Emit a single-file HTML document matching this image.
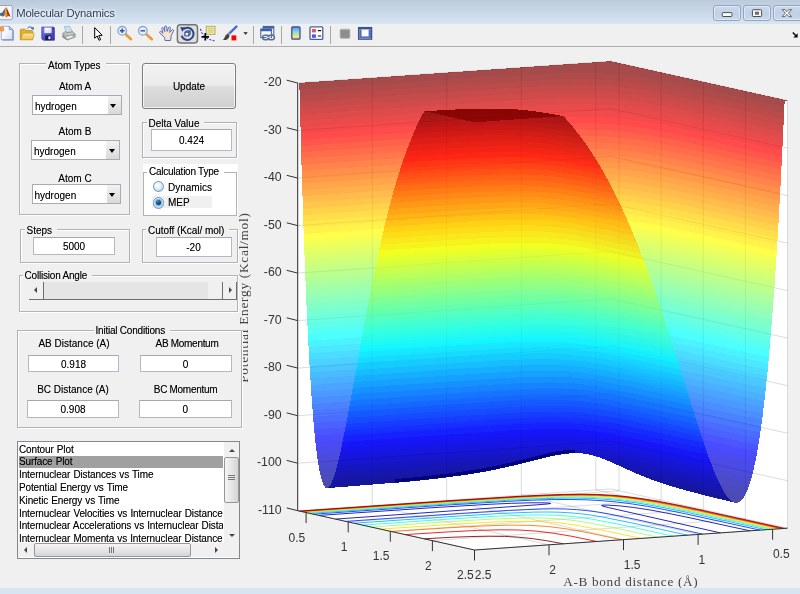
<!DOCTYPE html>
<html lang="en"><head><meta charset="utf-8"><title>Molecular Dynamics</title>
<style>
html,body{margin:0;padding:0}
body{width:800px;height:594px;overflow:hidden;position:relative;background:#f0f0f0;font-family:"Liberation Sans",sans-serif;font-size:10px;color:#000}
.abs,.abs *{position:absolute}
#win{left:0;top:0;width:800px;height:594px;overflow:hidden;will-change:transform}
#title{left:0;top:0;width:800px;height:24px;background:linear-gradient(#bccbdc,#c9d7e7 50%,#d7e4f2)}
#title .t{left:16.2px;top:7px;font-size:11.3px;letter-spacing:-.18px;color:#2f3d58;white-space:nowrap;text-shadow:0 0 3px #fff,0 0 5px #fff}
.cap{top:5px;height:14px;border:1px solid #93a4c2;border-radius:3px;background:linear-gradient(#cbd9ec,#c0d0e6 50%,#c9d7ea);box-shadow:inset 0 0 0 1px rgba(255,255,255,.45)}
#tb{left:0;top:24px;width:800px;height:22px;background:#f0f0f0;border-bottom:1px solid #adadad}
#bot{left:0;top:588.4px;width:800px;height:6px;background:#d7e4f1}
.pn{border:1px solid #b2b2b2;box-shadow:1px 1px 0 #fff,inset 1px 1px 0 #fff;box-sizing:border-box}
.pt{background:#f0f0f0;white-space:nowrap;line-height:12px;height:12px;padding:0 5px 0 2px}
.lb{white-space:nowrap;line-height:12px;height:12px;text-align:center}
.ed{background:#fff;border:1px solid #b3b9c1;border-top-color:#a2a8b0;box-sizing:border-box;text-align:center;white-space:nowrap}
.dd{background:#fff;border:1px solid #a6acb5;box-sizing:border-box;white-space:nowrap}
.dd .a{right:0;top:0;width:13px;height:100%;background:linear-gradient(#f2f2f2,#d9d9d9)}
.dd .a:after{content:"";position:absolute;left:2.5px;top:7.5px;border:3.5px solid transparent;border-top:4px solid #000;border-bottom:0}
.rd{width:11.6px;height:11.6px;border-radius:50%;border:1px solid #7d93ad;box-sizing:border-box;background:radial-gradient(circle at 42% 38%,#ffffff 10%,#d9eefb 45%,#a9d6f3 80%)}
.rd.on:after{content:"";position:absolute;left:2.3px;top:2.3px;width:5px;height:5px;border-radius:50%;background:radial-gradient(circle at 40% 35%,#3f86c8,#0b2a55 70%);box-shadow:0 0 0 1.2px #6fc4ee}
.it{left:1px;height:12.7px;line-height:12.7px;white-space:nowrap;width:204px;overflow:hidden;letter-spacing:-.13px;word-spacing:.5px}
.it.sel{background:#a0a0a0;margin-top:-.5px}
.pt{margin-top:2.5px}.lb{margin-top:1.3px}.ed{padding-top:1.2px}.dd span{margin-top:1px}
.pn{background:#f0f0f0}
#gui{text-shadow:0 0 .6px rgba(0,0,0,.4)}
</style></head><body>
<div id="win" class="abs">
<div id="title"><!--ICON--><div class="t">Molecular Dynamics</div>
<div class="cap" style="left:713px;width:26px"></div>
<div class="cap" style="left:743px;width:26px"></div>
<div class="cap" style="left:773px;width:30px"></div>
<svg style="left:700px;top:0" width="100" height="24" viewBox="700 0 100 24">
<rect x="722.3" y="12.6" width="9.6" height="3.9" rx=".8" fill="#fff" stroke="#4d4d4d" stroke-width="1"/>
<rect x="752.4" y="9.7" width="9.2" height="6.8" rx=".8" fill="#f6f6f6" stroke="#4d4d4d" stroke-width="1"/>
<rect x="755.3" y="12.1" width="3.4" height="2.1" fill="#6d7c9c" stroke="#444" stroke-width=".6"/>
<path d="M782.2 9.6H785L786.9 11.8L788.8 9.6H791.6L788.4 13.1L791.6 16.6H788.8L786.9 14.4L785 16.6H782.2L785.4 13.1Z" fill="#fff" stroke="#5a5a5a" stroke-width=".9" stroke-linejoin="round"/>
</svg>
</div>
<div id="tb"><svg class="abs" style="left:0;top:-24px" width="800" height="48" viewBox="0 0 800 48">
<defs>
<linearGradient id="gcb" x1="0" y1="0" x2="0" y2="1"><stop offset="0" stop-color="#6f7fe0"/><stop offset=".35" stop-color="#7fd0e8"/><stop offset=".6" stop-color="#b8e8a0"/><stop offset=".8" stop-color="#f4e88a"/><stop offset="1" stop-color="#f0b070"/></linearGradient>
<linearGradient id="gfo" x1="0" y1="0" x2="0" y2="1"><stop offset="0" stop-color="#fbe9a0"/><stop offset="1" stop-color="#eec04a"/></linearGradient>
<linearGradient id="gpg" x1="0" y1="0" x2="1" y2="1"><stop offset="0" stop-color="#ffffff"/><stop offset=".5" stop-color="#f2f6fd"/><stop offset="1" stop-color="#c9dbf6"/></linearGradient>
<linearGradient id="gsv" x1="0" y1="0" x2="1" y2="1"><stop offset="0" stop-color="#8484e6"/><stop offset=".5" stop-color="#5252cc"/><stop offset="1" stop-color="#3434a4"/></linearGradient><linearGradient id="gsl" x1="0" y1="0" x2="1" y2="1"><stop offset="0" stop-color="#ffffff"/><stop offset="1" stop-color="#d4d8ee"/></linearGradient></defs>
<!-- matlab logo in title -->
<g transform="translate(-4,5)"><rect x="0" y="0.5" width="16.3" height="14.2" rx="1.5" fill="#f4f6fa" stroke="#8a96ac" stroke-width=".8"/>
<path d="M2 9.5L6.5 7.5L9 3.5L10.2 2.2L12 6L14.5 12L12.5 10.5L10.5 12.5L8.5 10.2L7 11.5Z" fill="#d9541e"/><path d="M2 9.5L6.5 7.5L9 3.5L8.8 8L7 11.5Z" fill="#3a6ea5"/><path d="M10.2 2.2L12 6L14.5 12L12.5 10.5L11 8Z" fill="#a02a18"/><path d="M9 3.5L10.2 2.2L11 8L10.5 12.5L8.5 10.2L8.8 8Z" fill="#f0a030"/></g>
<!-- new -->
<path d="M2.2 27.2H10.2L13.6 30.6V40.4H2.2Z" fill="#5f72ac"/>
<path d="M1.3 26.3H9.2L12.7 29.8V39.5H1.3Z" fill="url(#gpg)" stroke="#8496c6" stroke-width=".7"/><path d="M9.2 26.3V29.8H12.7Z" fill="#b9c8ea" stroke="#7083b8" stroke-width=".6"/>
<circle cx="1.6" cy="28.9" r="2.5" fill="#f08a3c"/><circle cx="1.8" cy="28.9" r="1.1" fill="#ffd860"/><path d="M-.5 26.3L3.8 31.5M3.6 26.5L-.4 31.4" stroke="#f0944a" stroke-width=".9"/>
<!-- open -->
<path d="M20.3 30.2Q20.3 29.2 21.3 29.2H24.8L26.2 30.6H31.8Q32.6 30.6 32.6 31.4V39.6H20.3Z" fill="#e3b02e" stroke="#b58716" stroke-width=".8"/>
<path d="M20.6 39.7L22.9 33.6Q23.2 33 23.9 33H33.6Q34.3 33 34.1 33.7L32.6 39.7Z" fill="url(#gfo)" stroke="#c49a2c" stroke-width=".8"/>
<path d="M27.2 28.6C28.4 26.6 31 26.2 32.6 28.2" fill="none" stroke="#3a5a9c" stroke-width="1"/><path d="M33.9 26.7L33.5 30L30.8 28.6Z" fill="#3a5a9c"/>
<!-- save -->
<path d="M41.8 27.1H53.6L54.4 27.9V40.2H43.2L41.8 38.8Z" fill="url(#gsv)" stroke="#34349c" stroke-width=".7"/>
<rect x="44.4" y="27.5" width="7.2" height="5.6" fill="url(#gsl)"/><rect x="45.3" y="35.4" width="5.9" height="4.8" fill="#1a1a48"/><rect x="48.4" y="36.4" width="2" height="2.8" fill="#f0f0fa"/><rect x="52.6" y="28" width="1" height="1.2" fill="#23236a"/>
<!-- print -->
<path d="M64.2 26.6L69.4 26.2L72.6 31.6L66.4 32.6Z" fill="#c4e2f8" stroke="#8aa4c4" stroke-width=".6"/>
<path d="M62.8 33.4L65.6 31.4L66.6 32.8L72.6 31.8L75.2 34V37.2L67.4 40L62.8 37.4Z" fill="#c9c9c9" stroke="#7c7c7c" stroke-width=".7" stroke-linejoin="round"/>
<path d="M62.8 33.4L67.4 35.8L75.2 34M67.4 35.8V40" fill="none" stroke="#8a8a8a" stroke-width=".6"/>
<path d="M62.9 35L67.3 37.4V39.9L62.9 37.3Z" fill="#8e8e8e"/>
<path d="M65.2 37.2L71.6 35.4L73.8 36.8L67.6 38.9Z" fill="#f6f6f6" stroke="#9a9a9a" stroke-width=".4"/>
<rect x="72.6" y="35.2" width="1.6" height="1" fill="#3fbf4f"/>
<!-- sep -->
<path d="M82.5 26V44M110.5 26V44M253.5 26V44M281.5 26V44M330.5 26V44" stroke="#a8a8a8" stroke-width="1"/>
<!-- arrow cursor -->
<path d="M94.7 27.6V38.2L97.2 36L99 40.3L100.6 39.6L98.8 35.5L102.2 35.3Z" fill="#fff" stroke="#000" stroke-width="1" stroke-linejoin="miter"/>
<!-- zoom in -->
<path d="M125.2 33.8L131 39.2" stroke="#e59a3c" stroke-width="2.6" stroke-linecap="round"/><circle cx="122.2" cy="30.8" r="4.3" fill="#e6f0fb" stroke="#8ea6cc" stroke-width="1.3"/><path d="M119.9 30.8H124.5M122.2 28.5V33.1" stroke="#2c4fa3" stroke-width="1.4"/>
<!-- zoom out -->
<path d="M145.8 33.8L151.8 39.2" stroke="#e59a3c" stroke-width="2.6" stroke-linecap="round"/><circle cx="142.8" cy="30.8" r="4.3" fill="#e6f0fb" stroke="#8ea6cc" stroke-width="1.3"/><path d="M140.5 30.8H145.1" stroke="#2c4fa3" stroke-width="1.4"/>
<!-- hand -->
<path d="M165 40.5L164.6 37.5L160 33.2C159 32.2 160 30.8 161.2 31.6L163 33.2L161.8 28.6C161.6 27.2 163.2 27 163.6 28.2L164.8 31.6L164.6 27C164.7 25.6 166.6 25.6 166.7 27L167.2 31.4L168.6 27.6C169.1 26.4 170.7 26.9 170.4 28.2L169.6 32.4L171.8 30C172.8 29 174.2 30 173.4 31.2L171.2 35.4L170.6 40.5Z" fill="#fbe2cc" stroke="#4a68be" stroke-width=".95" stroke-linejoin="round"/>
<!-- rotate (pressed) -->
<rect x="177.4" y="24.7" width="20.1" height="18.2" rx="2.8" fill="#dedede" stroke="#747474" stroke-width="1.5"/>
<path d="M183.4 29.2A6.1 6.1 0 1 1 181.6 35.6" fill="none" stroke="#2d4486" stroke-width="2"/><path d="M180.2 27L185.6 27.6L182.2 31.8Z" fill="#2d4486"/>
<path d="M184.8 32.2L186.2 30.8H190.2V34.6L188.8 36H184.8Z" fill="#7d90c4" stroke="#2d4486" stroke-width=".8"/><rect x="185.8" y="33" width="2.2" height="2.2" fill="#f4f6fb"/><path d="M184.8 32.2H188.8V36M188.8 32.2L190.2 30.8" fill="none" stroke="#2d4486" stroke-width=".7"/>
<!-- data cursor -->
<path d="M200.5 28.8C201.5 35 206.5 39.5 214.5 40.8" fill="none" stroke="#2222ee" stroke-width="1" stroke-dasharray="2.2 1.4"/>
<rect x="206.2" y="26.3" width="8.8" height="8" fill="#f4eea0" stroke="#a09a50" stroke-width=".8"/><path d="M207.8 28.4H213.4M207.8 30.2H213.4M207.8 32H213.4" stroke="#b8b070" stroke-width=".7"/>
<path d="M201.5 36.8H209M205.3 33V40.6" stroke="#000" stroke-width="1.7"/>
<!-- brush -->
<path d="M236.4 26.6L228.6 34.2" stroke="#4a6ed0" stroke-width="2.4" stroke-linecap="round"/><path d="M229.6 33.2L227.2 35" stroke="#aaa" stroke-width="2.6"/>
<path d="M228.6 34.2C227.8 33.6 225.6 34.6 225 36.4C224.6 37.8 224 38.8 222.8 39.8C225.2 40.4 228 39.4 229 37.4C229.6 36.2 229.4 34.8 228.6 34.2Z" fill="#444"/>
<rect x="231.5" y="35.4" width="4.8" height="5" fill="#f00"/>
<path d="M243.4 32.2H247.8L245.6 34.8Z" fill="#222"/>
<!-- link -->
<rect x="263.2" y="26.4" width="10.6" height="8.6" fill="#f0f4fb" stroke="#3f5fa8" stroke-width="1"/><rect x="263.2" y="26.4" width="10.6" height="2.2" fill="#3f5fa8"/>
<rect x="260.8" y="29" width="10.6" height="8.6" fill="#f4f7fc" stroke="#3f5fa8" stroke-width="1"/><rect x="260.8" y="29" width="10.6" height="2.2" fill="#3f5fa8"/>
<rect x="262.6" y="35.2" width="6.4" height="4.6" rx="2.2" fill="none" stroke="#5a6e96" stroke-width="1.5"/><rect x="268" y="35.2" width="6.4" height="4.6" rx="2.2" fill="none" stroke="#5a6e96" stroke-width="1.5"/><path d="M266.4 37.5H270.8" stroke="#c8d2e4" stroke-width="1"/>
<!-- colorbar -->
<rect x="291.8" y="26.8" width="8.2" height="12.4" rx="1" fill="url(#gcb)" stroke="#3c4f96" stroke-width="1.3"/>
<!-- legend -->
<rect x="310" y="26.8" width="12.8" height="12.6" rx="1" fill="#fff" stroke="#48609e" stroke-width="1.3"/><rect x="311.9" y="29" width="4" height="3.4" fill="#f05050"/><rect x="311.9" y="34.4" width="4" height="3.4" fill="#5050f0"/><path d="M317.8 30.6H321.2M317.8 36H321.2" stroke="#111" stroke-width="1.2"/>
<!-- gray square -->
<rect x="340.2" y="29.2" width="9.6" height="9" rx="1" fill="#8e8e8e" stroke="#a6a6a6" stroke-width=".8"/><path d="M340.6 29.6H349.4" stroke="#b4b4b4" stroke-width="1"/>
<!-- plot tools -->
<rect x="358.6" y="27.6" width="13" height="11.6" fill="#fff" stroke="#3a5296" stroke-width="1.3"/><rect x="358.6" y="27.6" width="13" height="1.8" fill="#3a5296"/><rect x="359.2" y="29.4" width="2.4" height="7.6" fill="#5a70b0"/><rect x="368.6" y="29.4" width="2.4" height="7.6" fill="#5a70b0"/><rect x="359.2" y="36.4" width="11.8" height="2.2" fill="#5a70b0"/>
<!-- dock arrow -->
<path d="M792.8 32.6L796.4 36.2" fill="none" stroke="#000" stroke-width="1.4"/><path d="M797.6 33.2V37.4H793.4Z" fill="#000"/>
</svg>
</div>
<svg class="abs" id="plot" style="left:0;top:0" width="800" height="594" viewBox="0 0 800 594">
<g fill="#fff" shape-rendering="crispEdges"><polygon points="297.7,510.7 474.5,550 787.5,528.2 787.5,100.5 610.7,61.2 297.7,83"/></g>
<path d="M772.6 529.2L595.8 489.9L595.8 62.3M306.1 512.6L619.1 490.8L619.1 63.1M698.1 534.4L521.3 495.1L521.3 67.4M348.2 521.9L661.2 500.1L661.2 72.4M623.5 539.6L446.7 500.3L446.7 72.6M390.3 531.3L703.3 509.5L703.3 81.8M549 544.8L372.2 505.5L372.2 77.8M432.4 540.6L745.4 518.8L745.4 91.2M474.5 550L297.7 510.7L297.7 83M474.5 550L787.5 528.2L787.5 100.5M297.7 510.7L610.7 488.9L787.5 528.2M297.7 463.2L610.7 441.4L787.5 480.7M297.7 415.7L610.7 393.9L787.5 433.2M297.7 368.1L610.7 346.3L787.5 385.6M297.7 320.6L610.7 298.8L787.5 338.1M297.7 273.1L610.7 251.3L787.5 290.6M297.7 225.6L610.7 203.8L787.5 243.1M297.7 178.1L610.7 156.3L787.5 195.6M297.7 130.5L610.7 108.7L787.5 148M297.7 83L610.7 61.2L787.5 100.5" fill="none" stroke="#000" stroke-opacity=".125" stroke-width="1"/>
<g fill="none" stroke-width="1" stroke-opacity=".85"><path stroke="#0000af" d="M749.9 530.8L685.2 516.8L665.4 512.8L649.6 509.9L633.7 507.5L620.2 505.9L607.1 505.1L602.6 505.2L601.5 505.5L603 506.2L608.6 507.6L720.4 532.9M335.6 519.1L537.2 504.8L547.5 504L550.7 503.4L549.1 503.1L544.1 502.8L529.9 502.8L511.4 503.3L489.1 504.3L430.6 507.8L319 515.4"/><path stroke="#0030ff" d="M759.9 530.1L685.9 513.9L664.7 509.6L647.7 506.4L631.2 503.8L616.5 502L601.8 500.7L586.2 499.8L569.7 499.5L551.9 499.6L531.7 500.2L506.5 501.4L442.7 505.3L313.3 514.2M345.7 521.4L459.6 513.5L508.6 510.4L541.6 509L554.4 508.8L566 509L576.4 509.6L586.8 510.6L597.6 512L609.4 514L638 519.9L702.5 534.1"/><path stroke="#00afff" d="M765.9 529.7L688.5 512.7L667.1 508.3L649.9 505.1L634 502.5L619 500.5L604.1 499.2L589.4 498.4L573.3 498.1L555.6 498.3L534.7 498.9L510.5 500.1L445.9 504.1L309.9 513.4M354.1 523.2L453.8 516.4L501.6 513.4L534.4 512.1L547.4 512L559 512.2L569.9 512.8L580.4 513.7L591.1 515.1L602.8 517.1L631.3 522.8L687.6 535.2"/><path stroke="#20ffdf" d="M770.4 529.4L691 512L669.4 507.5L652.1 504.2L635.7 501.5L621.1 499.6L606.8 498.3L591.9 497.4L576 497.1L558 497.3L537.9 498L512.8 499.2L447.5 503.2L307.3 512.8M362.3 525.1L450.4 519L496.2 516.2L528.2 515L540.7 514.9L552.2 515.1L563 515.7L573.3 516.6L583.8 517.9L595.1 519.7L622.6 525.1L673.1 536.2"/><path stroke="#9fff60" d="M774.1 529.1L693.2 511.4L671.1 506.8L653.9 503.5L637.7 500.8L622.9 498.8L608.5 497.5L593.6 496.7L577.8 496.4L559.8 496.5L538.8 497.2L514.2 498.4L448.1 502.6L305.3 512.4M370.9 527L448.9 521.7L491.6 519.1L521.8 518L534.2 517.9L545.3 518.2L555.9 518.7L565.8 519.6L576.2 520.8L587 522.5L613.3 527.6L657.9 537.2"/><path stroke="#ffdf00" d="M777.2 528.9L694.6 510.7L672.3 506.1L655 502.8L638.7 500.1L624.1 498.2L609.9 496.8L595.1 496L579 495.7L561.1 495.9L540.7 496.6L515.7 497.8L449 502L303.5 512M380.4 529.1L447.7 524.6L487.5 522.3L516 521.3L538.3 521.5L548.5 522L558 522.8L567.8 524L578.2 525.6L602.6 530.2L641 538.4"/><path stroke="#ff7000" d="M780 528.7L696.1 510.3L673.8 505.6L656.3 502.3L639.7 499.5L625.1 497.6L610.8 496.2L596.2 495.4L580.3 495.1L562.8 495.3L542.2 496L517.1 497.2L450.1 501.4L302 511.6M391.5 531.5L446.8 527.9L482.2 526L508.2 525.1L529.2 525.3L547.8 526.5L566.9 528.9L589 532.9L621.4 539.8"/><path stroke="#ef0000" d="M782.4 528.6L697.3 509.8L675.3 505.2L657.5 501.8L641.2 499.1L626.4 497.1L612 495.7L597.1 494.9L581.1 494.7L563.3 494.9L542.5 495.6L517 496.8L450.1 501L300.6 511.3M405.2 534.6L448.3 531.9L477.5 530.4L500.5 529.8L519.4 530L536 531.1L553.2 533.2L571.9 536.3L597.1 541.5"/><path stroke="#800000" d="M784.6 528.4L698.7 509.5L676.5 504.8L658.8 501.4L642.1 498.6L627.4 496.7L613.1 495.3L598.2 494.5L582.2 494.2L564.4 494.4L543.8 495.1L518 496.4L450.6 500.6L299.3 511.1M424.3 538.8L451.1 537.3L471.9 536.5L489.3 536.2L504.5 536.4L518.5 537.2L532.2 538.6L546.5 540.7L563.4 543.8"/></g>
<g shape-rendering="crispEdges"><g id="sb" opacity=".7"><path fill="#00008f" d="M646.7 477.8L645.7 477.3L645.6 477L647.5 476.9L652.9 477.5L670 480.3L697.3 485.8L744.6 496L742.3 499.3L740 501.4L737.8 502.6L736.5 502.8L735.1 502.7L704.1 495.2L680.3 488.9L662.9 483.6ZM322 480.9L400.8 475.5L446.6 472.7L474.4 471.2L481.5 471L484.7 471.2L484.2 471.4L472.4 473.4L457.9 475.6L440.6 477.8L422.9 479.8L381.7 483.8L326.8 488.2L325.5 487.7L324.3 486.2L323 483.8Z"/><path fill="#00009f" d="M744.6 496L697.3 485.8L670 480.3L652.9 477.5L647.5 476.9L645.6 477L645.7 477.3L646.7 477.8L635.7 473.3L622.2 467.1L621.7 466.8L621.9 466.6L623.3 466.4L631.1 466.8L643.1 468.3L657.3 470.6L671.6 473.3L690.5 477.1L747.6 489.6L746.3 492.6ZM484.2 471.4L484.7 471.2L481.5 471L474.4 471.2L446.6 472.7L400.8 475.5L322 480.9L320.2 474.3L417 467.7L472.4 464.3L493.3 463.2L509.3 462.7L519 462.6L522.5 462.9L522.1 463.1L503 467.6Z"/><path fill="#0000af" d="M747.6 489.6L690.5 477.1L671.6 473.3L657.3 470.6L643.1 468.3L631.1 466.8L623.3 466.4L621.9 466.6L621.7 466.8L622.2 467.1L610.4 461.8L601.5 458.1L600.9 457.7L601.9 457.5L603.8 457.4L609.7 457.5L617.1 458L631.7 459.5L647.9 461.9L663.6 464.8L684 468.9L749.9 483.2ZM522.1 463.1L522.5 462.9L519 462.6L509.3 462.7L493.3 463.2L472.4 464.3L417 467.7L320.2 474.3L318.9 467.8L431.5 460.1L490.3 456.6L513.2 455.6L532.7 455.1L547.3 455.3L551.3 455.7L550.9 456L541.7 458.1Z"/><path fill="#0000bf" d="M749.9 483.2L684 468.9L663.6 464.8L647.9 461.9L631.7 459.5L617.1 458L609.7 457.5L603.8 457.4L601.9 457.5L600.9 457.7L601.5 458.1L594.9 456L589.2 454.5L584 453.6L577.9 453.1L572.3 453L566.2 453.4L559.5 454.3L550.9 456L551.3 455.7L547.3 455.3L532.7 455.1L513.2 455.6L490.3 456.6L431.5 460.1L318.9 467.8L317.9 461.3L440.8 452.9L474.8 450.8L502.7 449.3L525.2 448.4L544.5 448L561.2 448.1L580.6 448.7L599.5 449.5L614.3 450.6L628.2 452.1L643.7 454.4L661.2 457.5L681.5 461.5L751.8 476.8Z"/><path fill="#0000cf" d="M751.8 476.8L681.5 461.5L661.2 457.5L643.7 454.4L628.2 452.1L614.3 450.6L599.5 449.5L580.6 448.7L561.2 448.1L544.5 448L525.2 448.4L502.7 449.3L474.8 450.8L440.8 452.9L317.9 461.3L317 454.9L440.8 446.4L502.5 442.8L526.2 441.8L545.8 441.3L564.1 441.3L582.2 441.7L599.7 442.6L614.4 443.7L629.2 445.4L645.5 447.9L662.2 451L682.9 455.1L753.4 470.5Z"/><path fill="#0000df" d="M753.4 470.5L682.9 455.1L662.2 451L645.5 447.9L629.2 445.4L614.4 443.7L599.7 442.6L582.2 441.7L564.1 441.3L545.8 441.3L526.2 441.8L502.5 442.8L440.8 446.4L317 454.9L316.2 448.5L441.7 439.9L504.3 436.2L527.3 435.2L547.7 434.6L565.6 434.6L583.2 435L599.6 435.8L614.6 437L629.8 438.8L645.5 441.2L662.5 444.3L683.4 448.6L754.8 464.1Z"/><path fill="#0000ef" d="M754.8 464.1L683.4 448.6L662.5 444.3L645.5 441.2L629.8 438.8L614.6 437L599.6 435.8L583.2 435L565.6 434.6L547.7 434.6L527.3 435.2L504.3 436.2L441.7 439.9L316.2 448.5L315.4 442.1L441.4 433.5L504.3 429.7L528.3 428.6L548.4 428L566.8 427.9L583.9 428.3L600.1 429.1L615.4 430.4L630.2 432.2L645.9 434.7L662.8 437.8L684 442.1L756.1 457.8Z"/><path fill="#0000ff" d="M756.1 457.8L684 442.1L662.8 437.8L645.9 434.7L630.2 432.2L615.4 430.4L600.1 429.1L583.9 428.3L566.8 427.9L548.4 428L528.3 428.6L504.3 429.7L441.4 433.5L315.4 442.1L314.8 435.7L442.5 427L505.4 423.2L529.4 422.1L549.7 421.5L568 421.4L584.5 421.7L600.2 422.5L615.6 423.9L630.2 425.6L646.2 428.2L662.8 431.2L684.2 435.5L757.3 451.5Z"/><path fill="#0010ff" d="M757.3 451.5L684.2 435.5L662.8 431.2L646.2 428.2L630.2 425.6L615.6 423.9L600.2 422.5L584.5 421.7L568 421.4L549.7 421.5L529.4 422.1L505.4 423.2L442.5 427L314.8 435.7L314.2 429.3L442.3 420.6L506.1 416.7L530.5 415.6L550.5 415L569.1 414.9L585.5 415.2L601.2 416L616.1 417.3L630.7 419.2L646.9 421.7L664.3 424.9L685.3 429.2L758.3 445.2Z"/><path fill="#0020ff" d="M758.3 445.2L685.3 429.2L664.3 424.9L646.9 421.7L630.7 419.2L616.1 417.3L601.2 416L585.5 415.2L569.1 414.9L550.5 415L530.5 415.6L506.1 416.7L442.3 420.6L314.2 429.3L313.6 423L443.5 414.1L506.8 410.2L530.2 409.1L550.9 408.5L569.1 408.4L585.9 408.7L601.2 409.5L616.3 410.8L631.4 412.7L647.3 415.2L664 418.4L685.3 422.7L759.4 438.9Z"/><path fill="#0030ff" d="M759.4 438.9L685.3 422.7L664 418.4L647.3 415.2L631.4 412.7L616.3 410.8L601.2 409.5L585.9 408.7L569.1 408.4L550.9 408.5L530.2 409.1L506.8 410.2L443.5 414.1L313.6 423L313.1 416.6L443.4 407.7L507.1 403.8L531.7 402.7L552.1 402.1L569.9 401.9L586.6 402.3L602 403.1L616.7 404.4L631.5 406.2L647.8 408.8L664.8 412L686 416.4L760.3 432.6Z"/><path fill="#0040ff" d="M760.3 432.6L686 416.4L664.8 412L647.8 408.8L631.5 406.2L616.7 404.4L602 403.1L586.6 402.3L569.9 401.9L552.1 402.1L531.7 402.7L507.1 403.8L443.4 407.7L313.1 416.6L312.6 410.3L443.8 401.3L507.5 397.4L532.7 396.2L553 395.6L570.9 395.5L587.3 395.8L602.9 396.6L617.6 398L632.6 399.9L648.4 402.4L665.5 405.7L686.4 410L761.2 426.3Z"/><path fill="#0050ff" d="M761.2 426.3L686.4 410L665.5 405.7L648.4 402.4L632.6 399.9L617.6 398L602.9 396.6L587.3 395.8L570.9 395.5L553 395.6L532.7 396.2L507.5 397.4L443.8 401.3L312.6 410.3L312.1 403.9L444.2 394.9L507.9 391L532.6 389.8L553.3 389.2L571.5 389L587.6 389.4L603 390.2L617.7 391.5L632.7 393.4L648.7 396L665.6 399.2L686.8 403.6L762.1 420Z"/><path fill="#0060ff" d="M762.1 420L686.8 403.6L665.6 399.2L648.7 396L632.7 393.4L617.7 391.5L603 390.2L587.6 389.4L571.5 389L553.3 389.2L532.6 389.8L507.9 391L444.2 394.9L312.1 403.9L311.6 397.6L444.6 388.5L508.2 384.6L532.5 383.4L553.1 382.8L571.3 382.6L587.9 382.9L603.4 383.8L618.2 385.1L633.1 387L649 389.6L665.9 392.8L687.1 397.2L762.9 413.7Z"/><path fill="#0070ff" d="M762.9 413.7L687.1 397.2L665.9 392.8L649 389.6L633.1 387L618.2 385.1L603.4 383.8L587.9 382.9L571.3 382.6L553.1 382.8L532.5 383.4L508.2 384.6L444.6 388.5L311.6 397.6L311.2 391.3L444.2 382.2L509.2 378.2L534.1 377L554.6 376.4L572.7 376.2L588.3 376.5L603.7 377.4L618.2 378.7L632.8 380.5L649 383.2L666 386.3L687.9 390.9L763.6 407.4Z"/><path fill="#0080ff" d="M763.6 407.4L687.9 390.9L666 386.3L649 383.2L632.8 380.5L618.2 378.7L603.7 377.4L588.3 376.5L572.7 376.2L554.6 376.4L534.1 377L509.2 378.2L444.2 382.2L311.2 391.3L310.8 385L445.1 375.7L509.6 371.8L534 370.6L555 370L573 369.8L588.7 370.1L603.3 370.9L618.1 372.2L633.3 374.2L649 376.7L666.5 380L687.6 384.4L764.4 401.2Z"/><path fill="#008fff" d="M764.4 401.2L687.6 384.4L666.5 380L649 376.7L633.3 374.2L618.1 372.2L603.3 370.9L588.7 370.1L573 369.8L555 370L534 370.6L509.6 371.8L445.1 375.7L310.8 385L310.4 378.6L446.1 369.3L510.2 365.4L534.3 364.2L555 363.6L573 363.4L589 363.7L604 364.5L618.7 365.9L633.6 367.8L649.5 370.4L666.4 373.6L687.9 378L765.1 394.9Z"/><path fill="#009fff" d="M765.1 394.9L687.9 378L666.4 373.6L649.5 370.4L633.6 367.8L618.7 365.9L604 364.5L589 363.7L573 363.4L555 363.6L534.3 364.2L510.2 365.4L446.1 369.3L310.4 378.6L310 372.3L445.7 363L510.6 359L535.6 357.8L556 357.2L573.5 357L589.6 357.4L604.7 358.2L619.3 359.5L634.2 361.4L650 364L666.9 367.2L688.8 371.7L765.8 388.6Z"/><path fill="#00afff" d="M765.8 388.6L688.8 371.7L666.9 367.2L650 364L634.2 361.4L619.3 359.5L604.7 358.2L589.6 357.4L573.5 357L556 357.2L535.6 357.8L510.6 359L445.7 363L310 372.3L309.6 366L446.6 356.6L511.1 352.6L535.3 351.5L555.9 350.8L573.4 350.7L589.5 351L604.4 351.8L618.9 353.1L633.7 355L649.7 357.5L666.8 360.8L688.5 365.2L766.4 382.3Z"/><path fill="#00bfff" d="M766.4 382.3L688.5 365.2L666.8 360.8L649.7 357.5L633.7 355L618.9 353.1L604.4 351.8L589.5 351L573.4 350.7L555.9 350.8L535.3 351.5L511.1 352.6L446.6 356.6L309.6 366L309.2 359.7L445.4 350.4L510.7 346.3L535.4 345.1L555.9 344.5L574 344.3L590.1 344.6L605 345.4L619.7 346.8L634.5 348.7L650.6 351.3L667.7 354.5L689.6 359.1L767.1 376.1Z"/><path fill="#00cfff" d="M767.1 376.1L689.6 359.1L667.7 354.5L650.6 351.3L634.5 348.7L619.7 346.8L605 345.4L590.1 344.6L574 344.3L555.9 344.5L535.4 345.1L510.7 346.3L445.4 350.4L309.2 359.7L308.9 353.4L446 344L511.7 339.9L536.4 338.7L556.9 338.1L575.1 337.9L590.7 338.3L605.4 339.1L619.8 340.4L634.6 342.3L650.5 344.9L667.9 348.2L689.7 352.7L767.7 369.8Z"/><path fill="#00dfff" d="M767.7 369.8L689.7 352.7L667.9 348.2L650.5 344.9L634.6 342.3L619.8 340.4L605.4 339.1L590.7 338.3L575.1 337.9L556.9 338.1L536.4 338.7L511.7 339.9L446 344L308.9 353.4L308.6 347.1L446.5 337.6L511.8 333.6L536.5 332.4L556.5 331.8L574.5 331.6L590.6 331.9L605.6 332.7L620.2 334L634.7 335.9L650.8 338.5L668.2 341.8L689.8 346.3L768.3 363.5Z"/><path fill="#00efff" d="M768.3 363.5L689.8 346.3L668.2 341.8L650.8 338.5L634.7 335.9L620.2 334L605.6 332.7L590.6 331.9L574.5 331.6L556.5 331.8L536.5 332.4L511.8 333.6L446.5 337.6L308.6 347.1L308.2 340.8L446.6 331.3L511.9 327.2L536.6 326L557.3 325.4L575.2 325.2L591.3 325.5L606.1 326.3L620.3 327.6L635.4 329.6L651.5 332.3L668.6 335.5L690.4 340L768.9 357.2Z"/><path fill="#00ffff" d="M768.9 357.2L690.4 340L668.6 335.5L651.5 332.3L635.4 329.6L620.3 327.6L606.1 326.3L591.3 325.5L575.2 325.2L557.3 325.4L536.6 326L511.9 327.2L446.6 331.3L308.2 340.8L307.9 334.5L446.7 324.9L512.5 320.9L536.7 319.7L557.7 319L575.3 318.9L591.1 319.2L606 320L620.3 321.3L635.5 323.2L651.3 325.8L668.6 329.1L690.5 333.7L769.4 351Z"/><path fill="#10ffef" d="M769.4 351L690.5 333.7L668.6 329.1L651.3 325.8L635.5 323.2L620.3 321.3L606 320L591.1 319.2L575.3 318.9L557.7 319L536.7 319.7L512.5 320.9L446.7 324.9L307.9 334.5L307.6 328.2L447.3 318.6L512.6 314.5L537.3 313.4L557.3 312.7L575.3 312.5L591.3 312.8L606 313.6L620.7 314.9L635.2 316.8L651.6 319.5L668.9 322.8L690.5 327.3L770 344.7Z"/><path fill="#20ffdf" d="M770 344.7L690.5 327.3L668.9 322.8L651.6 319.5L635.2 316.8L620.7 314.9L606 313.6L591.3 312.8L575.3 312.5L557.3 312.7L537.3 313.4L512.6 314.5L447.3 318.6L307.6 328.2L307.3 321.9L447 312.3L512.3 308.2L537.4 307L557.9 306.4L575.4 306.2L591.4 306.5L606.4 307.3L620.9 308.6L635.8 310.5L651.9 313.2L669.2 316.5L690.8 321L770.5 338.4Z"/><path fill="#30ffcf" d="M770.5 338.4L690.8 321L669.2 316.5L651.9 313.2L635.8 310.5L620.9 308.6L606.4 307.3L591.4 306.5L575.4 306.2L557.9 306.4L537.4 307L512.3 308.2L447 312.3L307.3 321.9L307 315.6L446.7 306L512.4 301.9L537 300.7L558 300L575.9 299.8L591.8 300.1L606.8 300.9L621 302.2L636.1 304.2L652.2 306.9L669.3 310.1L691.4 314.7L771 332.2Z"/><path fill="#40ffbf" d="M771 332.2L691.4 314.7L669.3 310.1L652.2 306.9L636.1 304.2L621 302.2L606.8 300.9L591.8 300.1L575.9 299.8L558 300L537 300.7L512.4 301.9L446.7 306L307 315.6L306.7 309.3L447.3 299.6L513 295.6L537.6 294.4L558.7 293.7L576.4 293.5L592.2 293.8L606.9 294.6L621.3 295.9L636.4 297.9L652.5 300.5L669.8 303.8L691.6 308.4L771.5 325.9Z"/><path fill="#50ffaf" d="M771.5 325.9L691.6 308.4L669.8 303.8L652.5 300.5L636.4 297.9L621.3 295.9L606.9 294.6L592.2 293.8L576.4 293.5L558.7 293.7L537.6 294.4L513 295.6L447.3 299.6L306.7 309.3L306.4 303L447.5 293.3L513.7 289.2L538.1 288L558.8 287.3L576.8 287.2L592.3 287.5L607 288.2L621.2 289.5L636.3 291.5L652.3 294.1L669.7 297.5L691.9 302L772 319.6Z"/><path fill="#60ff9f" d="M772 319.6L691.9 302L669.7 297.5L652.3 294.1L636.3 291.5L621.2 289.5L607 288.2L592.3 287.5L576.8 287.2L558.8 287.3L538.1 288L513.7 289.2L447.5 293.3L306.4 303L306.2 296.7L448.1 287L514.3 282.8L538.7 281.7L559.5 281L577.2 280.8L593 281.1L607.8 282L622.1 283.3L636.6 285.2L653 287.9L670.3 291.2L692.4 295.8L772.5 313.4Z"/><path fill="#70ff8f" d="M772.5 313.4L692.4 295.8L670.3 291.2L653 287.9L636.6 285.2L622.1 283.3L607.8 282L593 281.1L577.2 280.8L559.5 281L538.7 281.7L514.3 282.8L448.1 287L306.2 296.7L305.9 290.4L447.4 280.7L513.5 276.6L538.6 275.4L559 274.7L576.6 274.5L592.6 274.8L607.1 275.6L621.7 276.9L636.5 278.8L652.6 281.5L670.2 284.8L692.3 289.4L773 307.1Z"/><path fill="#80ff80" d="M773 307.1L692.3 289.4L670.2 284.8L652.6 281.5L636.5 278.8L621.7 276.9L607.1 275.6L592.6 274.8L576.6 274.5L559 274.7L538.6 275.4L513.5 276.6L447.4 280.7L305.9 290.4L305.6 284.1L447.6 274.4L514.2 270.2L539.3 269L559.4 268.4L577.2 268.2L593.3 268.5L608.1 269.3L622.3 270.6L637.1 272.5L653.4 275.2L671 278.6L693 283.2L773.4 300.9Z"/><path fill="#8fff70" d="M773.4 300.9L693 283.2L671 278.6L653.4 275.2L637.1 272.5L622.3 270.6L608.1 269.3L593.3 268.5L577.2 268.2L559.4 268.4L539.3 269L514.2 270.2L447.6 274.4L305.6 284.1L305.4 277.9L447.7 268.1L514.4 263.9L539.5 262.7L559.7 262L577.2 261.9L593.1 262.1L608.1 262.9L622.4 264.3L637 266.2L653.3 268.9L670.9 272.2L693 276.8L773.9 294.6Z"/><path fill="#9fff60" d="M773.9 294.6L693 276.8L670.9 272.2L653.3 268.9L637 266.2L622.4 264.3L608.1 262.9L593.1 262.1L577.2 261.9L559.7 262L539.5 262.7L514.4 263.9L447.7 268.1L305.4 277.9L305.1 271.6L447.9 261.7L514.5 257.6L539.6 256.4L560 255.7L577.6 255.5L593.6 255.8L608.3 256.6L622.6 258L637.2 259.9L653.5 262.6L671.1 265.9L693.2 270.5L774.3 288.3Z"/><path fill="#afff50" d="M774.3 288.3L693.2 270.5L671.1 265.9L653.5 262.6L637.2 259.9L622.6 258L608.3 256.6L593.6 255.8L577.6 255.5L560 255.7L539.6 256.4L514.5 257.6L447.9 261.7L305.1 271.6L304.9 265.3L448.1 255.4L514.7 251.3L539.8 250.1L560.2 249.4L577.8 249.2L593.8 249.5L608.5 250.3L622.8 251.6L637.4 253.5L653.7 256.2L671.3 259.6L693.4 264.2L774.8 282.1Z"/><path fill="#bfff40" d="M774.8 282.1L693.4 264.2L671.3 259.6L653.7 256.2L637.4 253.5L622.8 251.6L608.5 250.3L593.8 249.5L577.8 249.2L560.2 249.4L539.8 250.1L514.7 251.3L448.1 255.4L304.9 265.3L304.7 259L448.4 249.1L514.9 245L540 243.7L560.4 243.1L578 242.9L593.8 243.2L608.7 244L623 245.3L637.6 247.2L653.9 249.9L671.5 253.3L693.5 257.9L775.2 275.8Z"/><path fill="#cfff30" d="M775.2 275.8L693.5 257.9L671.5 253.3L653.9 249.9L637.6 247.2L623 245.3L608.7 244L593.8 243.2L578 242.9L560.4 243.1L540 243.7L514.9 245L448.4 249.1L304.7 259L304.4 252.7L448.6 242.8L515.2 238.6L540.2 237.4L560.5 236.8L578.2 236.6L594 236.9L608.9 237.7L623.2 239L637.7 240.9L654.1 243.6L671.6 247L693.7 251.6L775.6 269.6Z"/><path fill="#dfff20" d="M775.6 269.6L693.7 251.6L671.6 247L654.1 243.6L637.7 240.9L623.2 239L608.9 237.7L594 236.9L578.2 236.6L560.5 236.8L540.2 237.4L515.2 238.6L448.6 242.8L304.4 252.7L304.2 246.4L448.8 236.5L515.4 232.3L540.5 231.1L560.6 230.5L578.4 230.3L594.2 230.6L609.1 231.4L623.4 232.7L637.9 234.6L654.2 237.3L671.5 240.6L693.9 245.2L776 263.3Z"/><path fill="#efff10" d="M776 263.3L693.9 245.2L671.5 240.6L654.2 237.3L637.9 234.6L623.4 232.7L609.1 231.4L594.2 230.6L578.4 230.3L560.6 230.5L540.5 231.1L515.4 232.3L448.8 236.5L304.2 246.4L304 240.2L449 230.2L515.6 226L540.6 224.8L560.7 224.1L578.4 223.9L594.3 224.2L609.3 225L623.7 226.4L638.1 228.3L654.4 231L671.7 234.3L694 238.9L776.4 257Z"/><path fill="#ffff00" d="M776.4 257L694 238.9L671.7 234.3L654.4 231L638.1 228.3L623.7 226.4L609.3 225L594.3 224.2L578.4 223.9L560.7 224.1L540.6 224.8L515.6 226L449 230.2L304 240.2L303.7 233.9L449.2 223.9L515.6 219.7L540.5 218.5L560.9 217.8L578.8 217.6L594.9 217.9L609.7 218.8L624 220.1L638.5 222L654.8 224.7L672.1 228L694.4 232.7L776.8 250.8Z"/><path fill="#ffef00" d="M777.2 244.5L776.8 250.8L694.4 232.7L672.1 228L654.8 224.7L638.5 222L624 220.1L609.7 218.8L594.9 217.9L578.8 217.6L560.9 217.8L540.5 218.5L515.6 219.7L449.2 223.9L303.7 233.9L303.5 227.6L449 217.6L515.6 213.4L540.4 212.2L561.1 211.5L579 211.3L595.1 211.6L610 212.4L624.3 213.8L638.8 215.7L655.2 218.4L672.5 221.8L694.8 226.4Z"/><path fill="#ffdf00" d="M777.2 244.5L694.8 226.4L672.5 221.8L655.2 218.4L638.8 215.7L624.3 213.8L610 212.4L595.1 211.6L579 211.3L561.1 211.5L540.4 212.2L515.6 213.4L449 217.6L303.5 227.6L303.3 221.3L449.2 211.3L515.8 207.1L540.9 205.9L561.9 205.2L579.6 205L595.4 205.3L610.2 206.1L624.6 207.5L639.2 209.5L655.7 212.2L673.3 215.6L695.2 220.2L777.6 238.3Z"/><path fill="#ffcf00" d="M777.6 238.3L695.2 220.2L673.3 215.6L655.7 212.2L639.2 209.5L624.6 207.5L610.2 206.1L595.4 205.3L579.6 205L561.9 205.2L540.9 205.9L515.8 207.1L449.2 211.3L303.3 221.3L303.1 215.1L449 205L515.6 200.8L540.1 199.6L561 198.9L578.9 198.7L594.9 199L609.6 199.8L623.9 201.1L638.9 203.1L655.2 205.8L672.7 209.1L694.8 213.7L777.9 232Z"/><path fill="#ffbf00" d="M777.9 232L694.8 213.7L672.7 209.1L655.2 205.8L638.9 203.1L623.9 201.1L609.6 199.8L594.9 199L578.9 198.7L561 198.9L540.1 199.6L515.6 200.8L449 205L303.1 215.1L302.9 208.8L448.8 198.7L515.8 194.5L540.8 193.3L561.8 192.6L579.7 192.4L595.2 192.7L609.9 193.5L624 194.8L639 196.8L655.3 199.5L672.8 202.8L695.2 207.5L778.3 225.8Z"/><path fill="#ffaf00" d="M778.3 225.8L695.2 207.5L672.8 202.8L655.3 199.5L639 196.8L624 194.8L609.9 193.5L595.2 192.7L579.7 192.4L561.8 192.6L540.8 193.3L515.8 194.5L448.8 198.7L302.9 208.8L302.7 202.5L449.1 192.4L516.1 188.2L541.6 187L562.1 186.3L579.7 186.1L595.4 186.4L610.2 187.2L624.4 188.5L639.1 190.5L655.4 193.2L672.9 196.5L695.3 201.2L778.7 219.5Z"/><path fill="#ff9f00" d="M778.7 219.5L695.3 201.2L672.9 196.5L655.4 193.2L639.1 190.5L624.4 188.5L610.2 187.2L595.4 186.4L579.7 186.1L562.1 186.3L541.6 187L516.1 188.2L449.1 192.4L302.7 202.5L302.5 196.2L449.3 186.1L516.3 181.9L541.8 180.7L562 180L579.7 179.8L595.6 180.1L610.5 180.9L624.8 182.2L639.2 184.1L655.5 186.9L672.8 190.2L695.4 194.9L779 213.3Z"/><path fill="#ff8f00" d="M779.4 207L779 213.3L695.4 194.9L672.8 190.2L655.5 186.9L639.2 184.1L624.8 182.2L610.5 180.9L595.6 180.1L579.7 179.8L562 180L541.8 180.7L516.3 181.9L449.3 186.1L302.5 196.2L302.3 190L449.6 179.8L516.1 175.6L541.5 174.4L562 173.7L580 173.5L596 173.8L610.8 174.6L625.2 176L639.8 177.9L656.2 180.6L673.7 184L695.7 188.6Z"/><path fill="#ff8000" d="M779.4 207L695.7 188.6L673.7 184L656.2 180.6L639.8 177.9L625.2 176L610.8 174.6L596 173.8L580 173.5L562 173.7L541.5 174.4L516.1 175.6L449.6 179.8L302.3 190L302.1 183.7L450.3 173.5L516.8 169.3L541.9 168.1L562.8 167.4L580.6 167.2L596.3 167.5L611.2 168.3L625.5 169.7L640.3 171.7L656.6 174.4L674.1 177.8L696.1 182.3L779.7 200.7Z"/><path fill="#ff7000" d="M779.7 200.7L696.1 182.3L674.1 177.8L656.6 174.4L640.3 171.7L625.5 169.7L611.2 168.3L596.3 167.5L580.6 167.2L562.8 167.4L541.9 168.1L516.8 169.3L450.3 173.5L302.1 183.7L301.9 177.4L449.6 167.2L517.1 163L542.6 161.8L563.1 161.1L580.6 160.9L596.4 161.2L610.7 162L625.2 163.3L640.2 165.3L656.4 168L674.1 171.4L696.4 176.1L780 194.5Z"/><path fill="#ff6000" d="M780 194.5L696.4 176.1L674.1 171.4L656.4 168L640.2 165.3L625.2 163.3L610.7 162L596.4 161.2L580.6 160.9L563.1 161.1L542.6 161.8L517.1 163L449.6 167.2L301.9 177.4L301.7 171.1L449.9 160.9L516.9 156.7L542.4 155.5L562.8 154.8L580.5 154.6L596.4 154.9L611 155.7L625.2 157L639.9 159L656.5 161.7L673.9 165.1L696.2 169.7L780.4 188.2Z"/><path fill="#ff5000" d="M780.7 182L780.4 188.2L696.2 169.7L673.9 165.1L656.5 161.7L639.9 159L625.2 157L611 155.7L596.4 154.9L580.5 154.6L562.8 154.8L542.4 155.5L516.9 156.7L449.9 160.9L301.7 171.1L301.5 164.9L450.1 154.6L516.9 150.4L542.2 149.2L562.7 148.5L580.5 148.3L596.4 148.6L611.3 149.4L625.6 150.8L640.3 152.7L656.7 155.4L674.1 158.8L696.3 163.4Z"/><path fill="#ff4000" d="M780.7 182L696.3 163.4L674.1 158.8L656.7 155.4L640.3 152.7L625.6 150.8L611.3 149.4L596.4 148.6L580.5 148.3L562.7 148.5L542.2 149.2L516.9 150.4L450.1 154.6L301.5 164.9L301.4 158.6L449.5 148.4L516.4 144.2L541.7 142.9L562.4 142.2L580.3 142L596.4 142.3L611.3 143.1L625.7 144.5L640.7 146.4L656.9 149.2L674.6 152.6L696.6 157.2L781 175.7Z"/><path fill="#ff3000" d="M781 175.7L696.6 157.2L674.6 152.6L656.9 149.2L640.7 146.4L625.7 144.5L611.3 143.1L596.4 142.3L580.3 142L562.4 142.2L541.7 142.9L516.4 144.2L449.5 148.4L301.4 158.6L301.2 152.3L449.3 142.1L516.7 137.9L541.7 136.6L562.6 135.9L580.5 135.7L596.5 136L611.2 136.8L625.4 138.1L640.1 140L656.7 142.8L674.2 146.2L696.7 150.9L781.3 169.5Z"/><path fill="#ff2000" d="M781.7 163.2L781.3 169.5L696.7 150.9L674.2 146.2L656.7 142.8L640.1 140L625.4 138.1L611.2 136.8L596.5 136L580.5 135.7L562.6 135.9L541.7 136.6L516.7 137.9L449.3 142.1L301.2 152.3L301 146.1L450 135.8L517.5 131.6L543 130.3L563.5 129.6L581.1 129.4L597 129.7L611.6 130.5L625.8 131.8L640.4 133.8L657 136.5L674.5 139.9L697 144.6Z"/><path fill="#ff1000" d="M781.7 163.2L697 144.6L674.5 139.9L657 136.5L640.4 133.8L625.8 131.8L611.6 130.5L597 129.7L581.1 129.4L563.5 129.6L543 130.3L517.5 131.6L450 135.8L301 146.1L300.8 139.8L450.3 129.5L517.3 125.3L542.6 124L563.2 123.3L581.1 123.1L597.1 123.4L612 124.2L626.3 125.6L640.9 127.5L657.6 130.3L675.4 133.8L697.4 138.4L782 157Z"/><path fill="#ff0000" d="M782 157L697.4 138.4L675.4 133.8L657.6 130.3L640.9 127.5L626.3 125.6L612 124.2L597.1 123.4L581.1 123.1L563.2 123.3L542.6 124L517.3 125.3L450.3 129.5L300.8 139.8L300.6 133.5L449.7 123.2L517.5 119L543 117.7L564 117L581.8 116.8L597.5 117.1L612.3 118L626.7 119.3L641.5 121.3L657.7 124L675.4 127.4L697.7 132.1L782.3 150.7Z"/><path fill="#ef0000" d="M782.3 150.7L697.7 132.1L675.4 127.4L657.7 124L641.5 121.3L626.7 119.3L612.3 118L597.5 117.1L581.8 116.8L564 117L543 117.7L517.5 119L449.7 123.2L300.6 133.5L300.5 127.2L450.4 116.9L517.8 112.7L543.3 111.4L564.1 110.7L581.7 110.5L597.5 110.8L611.9 111.6L626.3 113L641.2 115L657.7 117.7L675.2 121.1L697.7 125.8L782.6 144.5Z"/><path fill="#df0000" d="M782.9 138.2L782.6 144.5L697.7 125.8L675.2 121.1L657.7 117.7L641.2 115L626.3 113L611.9 111.6L597.5 110.8L581.7 110.5L564.1 110.7L543.3 111.4L517.8 112.7L450.4 116.9L300.5 127.2L300.3 121L450.2 110.6L517.6 106.4L543.1 105.1L563.7 104.5L581.5 104.3L597.5 104.5L612.3 105.4L626.6 106.7L641.3 108.7L657.8 111.4L675.5 114.8L697.8 119.5Z"/><path fill="#cf0000" d="M782.9 138.2L697.8 119.5L675.5 114.8L657.8 111.4L641.3 108.7L626.6 106.7L612.3 105.4L597.5 104.5L581.5 104.3L563.7 104.5L543.1 105.1L517.6 106.4L450.2 110.6L300.3 121L300.1 114.7L450.1 104.4L517.9 100.1L542.9 98.9L563.9 98.2L581.8 98L597.8 98.3L612.7 99.1L627.1 100.5L641.9 102.4L658.1 105.2L675.8 108.6L698.3 113.3L783.2 132Z"/><path fill="#bf0000" d="M783.2 132L698.3 113.3L675.8 108.6L658.1 105.2L641.9 102.4L627.1 100.5L612.7 99.1L597.8 98.3L581.8 98L563.9 98.2L542.9 98.9L517.9 100.1L450.1 104.4L300.1 114.7L300 108.4L450.3 98.1L517.7 93.8L543.2 92.6L564.2 91.9L582.1 91.7L597.5 92L612.2 92.8L626.4 94.1L641.3 96L657.8 98.8L675.3 102.2L697.8 106.9L783.5 125.7Z"/><path fill="#af0000" d="M783.8 119.5L783.5 125.7L697.8 106.9L675.3 102.2L657.8 98.8L641.3 96L626.4 94.1L612.2 92.8L597.5 92L582.1 91.7L564.2 91.9L543.2 92.6L517.7 93.8L450.3 98.1L300 108.4L299.8 102.2L450.6 91.8L517.9 87.6L543.5 86.3L564.1 85.6L581.9 85.4L597.8 85.7L612.6 86.5L626.9 87.8L641.6 89.8L658.2 92.6L675.9 96L698.1 100.6Z"/><path fill="#9f0000" d="M783.8 119.5L698.1 100.6L675.9 96L658.2 92.6L641.6 89.8L626.9 87.8L612.6 86.5L597.8 85.7L581.9 85.4L564.1 85.6L543.5 86.3L517.9 87.6L450.6 91.8L299.8 102.2L299.6 95.9L450.5 85.5L518.3 81.3L543.8 80L564.8 79.3L582.7 79.1L598.2 79.4L613.1 80.2L627.5 81.6L642.3 83.6L658.5 86.3L676.2 89.7L698.7 94.4L784 113.2Z"/><path fill="#8f0000" d="M784.3 107L784 113.2L698.7 94.4L676.2 89.7L658.5 86.3L642.3 83.6L627.5 81.6L613.1 80.2L598.2 79.4L582.7 79.1L564.8 79.3L543.8 80L518.3 81.3L450.5 85.5L299.6 95.9L299.5 89.6L457.5 78.8L518.6 75L544.1 73.7L564.6 73L582.5 72.8L597.9 73.1L612.6 73.9L626.8 75.2L641.7 77.2L658.2 79.9L675.4 83.2L694.6 87.2Z"/><path fill="#800000" d="M784.3 107L694.6 87.2L675.4 83.2L658.2 79.9L641.7 77.2L626.8 75.2L612.6 73.9L597.9 73.1L582.5 72.8L564.6 73L544.1 73.7L518.6 75L457.5 78.8L299.5 89.6L299.2 83.4L297.7 83L610.7 61.2L787.5 100.5L784.8 100.7Z"/></g>
<g id="sf" opacity=".7"><path fill="#00008f" d="M727.7 497.2L670.5 484.1L655.7 480.4L647.2 478L662.8 483.5L681.9 489.3L709.1 496.5L734.7 502.6L732.9 501.9L731.1 500.7L729.3 499ZM483.4 471.5L471.1 472.7L443.9 474.9L331.5 483L330.3 485.2L329.3 486.7L328.1 487.8L327 488.2L383.3 483.6L423.6 479.8L456.1 475.8L470.6 473.7Z"/><path fill="#00009f" d="M647.2 478L655.7 480.4L670.5 484.1L727.7 497.2L725.7 494.5L723.6 491.2L648.6 474.1L630.5 469.7L622.7 467.4L636.2 473.5ZM521.9 463.1L510.1 464.5L480.6 466.8L333.8 477.3L331.5 483L443.9 474.9L471.1 472.7L483.4 471.5L502.6 467.7Z"/><path fill="#0000af" d="M622.7 467.4L630.5 469.7L648.6 474.1L723.6 491.2L720.4 485.2L608.4 459.9L601.7 458.2L610.7 461.9ZM550.7 456L537.2 457.2L335.6 471.5L333.8 477.3L480.6 466.8L510.1 464.5L521.9 463.1L540.6 458.4Z"/><path fill="#0000bf" d="M601.7 458.2L608.4 459.9L720.4 485.2L717.5 479.2L635.6 460.8L612.3 455.9L601.9 453.9L592.6 452.5L583.8 451.6L575.3 451.1L565.9 450.9L554.9 451.1L524.1 452.6L337.2 465.6L335.6 471.5L537.2 457.2L550.7 456L559.3 454.3L565.3 453.5L571.8 453L577.4 453L583.8 453.6L589 454.5L594.7 455.9Z"/><path fill="#0000cf" d="M714.9 473.1L638.3 456L612.4 450.6L601.3 448.6L591.5 447.3L582.4 446.3L572.5 445.8L562.4 445.6L550.3 445.8L536.2 446.4L518.3 447.3L473.8 450.2L338.7 459.7L337.2 465.6L524.1 452.6L554.9 451.1L565.9 450.9L575.3 451.1L583.8 451.6L592.6 452.5L601.9 453.9L612.3 455.9L635.6 460.8L717.5 479.2Z"/><path fill="#0000df" d="M712.5 467.1L639.5 450.8L612.4 445.2L600.9 443.2L591 441.8L581.4 440.8L571.4 440.3L560.4 440.1L548 440.3L533.9 440.8L515.8 441.7L469.4 444.7L340.1 453.8L338.7 459.7L473.8 450.2L518.3 447.3L536.2 446.4L550.3 445.8L562.4 445.6L572.5 445.8L582.4 446.3L591.5 447.3L601.3 448.6L612.4 450.6L638.3 456L714.9 473.1Z"/><path fill="#0000ef" d="M710.2 461L639.9 445.4L612.1 439.6L600.6 437.6L590.3 436.2L580.1 435.2L570.1 434.7L559.3 434.5L546.5 434.6L531.8 435.1L513.7 436.1L466.3 439.1L341.4 447.8L340.1 453.8L469.4 444.7L515.8 441.7L533.9 440.8L548 440.3L560.4 440.1L571.4 440.3L581.4 440.8L591 441.8L600.9 443.2L612.4 445.2L639.5 450.8L712.5 467.1Z"/><path fill="#0000ff" d="M707.9 454.9L639.6 439.8L611.2 433.9L599.5 431.9L589.1 430.5L578.8 429.5L568.5 429L557.7 428.8L544.8 428.9L529.6 429.5L511.5 430.4L463.6 433.5L342.6 441.9L341.4 447.8L466.3 439.1L513.7 436.1L531.8 435.1L546.5 434.6L559.3 434.5L570.1 434.7L580.1 435.2L590.3 436.2L600.6 437.6L612.1 439.6L639.9 445.4L710.2 461Z"/><path fill="#0010ff" d="M705.8 448.9L639.1 434.1L610.6 428.2L599 426.2L588.5 424.8L578.4 423.8L567.8 423.2L556.4 423L543.5 423.2L528.8 423.7L510.6 424.6L462.1 427.7L343.8 435.9L342.6 441.9L463.6 433.5L511.5 430.4L529.6 429.5L544.8 428.9L557.7 428.8L568.5 429L578.8 429.5L589.1 430.5L599.5 431.9L611.2 433.9L639.6 439.8L707.9 454.9Z"/><path fill="#0020ff" d="M703.7 442.8L638.3 428.3L609.7 422.4L597.9 420.5L587.4 419L577.1 418.1L566.4 417.5L555 417.3L542.1 417.4L526.9 418L508.7 418.9L460.2 422L345 430L343.8 435.9L462.1 427.7L510.6 424.6L528.8 423.7L543.5 423.2L556.4 423L567.8 423.2L578.4 423.8L588.5 424.8L599 426.2L610.6 428.2L639.1 434.1L705.8 448.9Z"/><path fill="#0030ff" d="M701.7 436.7L637.7 422.5L609 416.7L597.3 414.7L586.8 413.3L576.5 412.3L565.6 411.7L554.1 411.5L541.2 411.6L526.4 412.1L508.1 413.1L459.2 416.2L346.2 424L345 430L460.2 422L508.7 418.9L526.9 418L542.1 417.4L555 417.3L566.4 417.5L577.1 418.1L587.4 419L597.9 420.5L609.7 422.4L638.3 428.3L703.7 442.8Z"/><path fill="#0040ff" d="M699.7 430.6L636.9 416.7L607.9 410.8L596.1 408.9L585.5 407.5L575.1 406.5L564.3 405.9L552.5 405.7L539.7 405.9L524.9 406.4L506.6 407.3L458.1 410.3L347.3 418L346.2 424L459.2 416.2L508.1 413.1L526.4 412.1L541.2 411.6L554.1 411.5L565.6 411.7L576.5 412.3L586.8 413.3L597.3 414.7L609 416.7L637.7 422.5L701.7 436.7Z"/><path fill="#0050ff" d="M697.7 424.5L635.9 410.9L607.1 405L595.2 403.1L584.6 401.7L574.2 400.7L563.4 400.1L552 399.9L539 400L523.8 400.5L505.5 401.5L457 404.5L348.4 412L347.3 418L458.1 410.3L506.6 407.3L524.9 406.4L539.7 405.9L552.5 405.7L564.3 405.9L575.1 406.5L585.5 407.5L596.1 408.9L607.9 410.8L636.9 416.7L699.7 430.6Z"/><path fill="#0060ff" d="M695.7 418.4L635.2 405.1L606.3 399.2L594.5 397.3L583.8 395.9L573.4 394.9L562.5 394.3L551 394.1L538.1 394.2L523.2 394.7L504.9 395.6L456.3 398.7L349.5 406L348.4 412L457 404.5L505.5 401.5L523.8 400.5L539 400L552 399.9L563.4 400.1L574.2 400.7L584.6 401.7L595.2 403.1L607.1 405L635.9 410.9L697.7 424.5Z"/><path fill="#0070ff" d="M693.8 412.3L634.2 399.2L605.6 393.4L593.7 391.4L583.1 390L572.7 389.1L562 388.5L550.5 388.3L537.5 388.4L522.6 388.9L504.3 389.8L455.6 392.8L350.6 400.1L349.5 406L456.3 398.7L504.9 395.6L523.2 394.7L538.1 394.2L551 394.1L562.5 394.3L573.4 394.9L583.8 395.9L594.5 397.3L606.3 399.2L635.2 405.1L695.7 418.4Z"/><path fill="#0080ff" d="M691.9 406.2L633.3 393.3L604.6 387.6L592.7 385.6L582 384.2L571.5 383.2L560.9 382.7L549.3 382.4L536.4 382.6L521.5 383L503.1 383.9L454.9 386.9L351.7 394.1L350.6 400.1L455.6 392.8L504.3 389.8L522.6 388.9L537.5 388.4L550.5 388.3L562 388.5L572.7 389.1L583.1 390L593.7 391.4L605.6 393.4L634.2 399.2L693.8 412.3Z"/><path fill="#008fff" d="M690 400.1L632.4 387.4L603.9 381.7L592 379.8L581.3 378.4L570.8 377.4L560.1 376.8L548.5 376.6L535.8 376.7L520.8 377.2L502.5 378.1L454.2 381.1L352.8 388.1L351.7 394.1L454.9 386.9L503.1 383.9L521.5 383L536.4 382.6L549.3 382.4L560.9 382.7L571.5 383.2L582 384.2L592.7 385.6L604.6 387.6L633.3 393.3L691.9 406.2Z"/><path fill="#009fff" d="M688.1 394L631.5 381.6L603 375.9L591 373.9L580.3 372.5L569.7 371.5L559.2 371L547.6 370.8L534.6 370.9L519.7 371.4L501.8 372.2L454 375.2L353.9 382.1L352.8 388.1L454.2 381.1L502.5 378.1L520.8 377.2L535.8 376.7L548.5 376.6L560.1 376.8L570.8 377.4L581.3 378.4L592 379.8L603.9 381.7L632.4 387.4L690 400.1Z"/><path fill="#00afff" d="M686.2 387.9L630.3 375.6L602 370L590.3 368.1L579.6 366.7L569.1 365.7L558.4 365.1L546.9 364.9L534 365L519 365.5L501.1 366.4L453.3 369.3L354.9 376.1L353.9 382.1L454 375.2L501.8 372.2L519.7 371.4L534.6 370.9L547.6 370.8L559.2 371L569.7 371.5L580.3 372.5L591 373.9L603 375.9L631.5 381.6L688.1 394Z"/><path fill="#00bfff" d="M684.3 381.8L629.4 369.8L601.1 364.1L589.4 362.2L578.6 360.8L568.1 359.9L557.3 359.3L545.8 359.1L532.8 359.2L518 359.7L500.4 360.5L453 363.4L356 370.1L354.9 376.1L453.3 369.3L501.1 366.4L519 365.5L534 365L546.9 364.9L558.4 365.1L569.1 365.7L579.6 366.7L590.3 368.1L602 370L630.3 375.6L686.2 387.9Z"/><path fill="#00cfff" d="M682.4 375.7L628 363.8L612.5 360.6L599.9 358.2L588.4 356.4L577.6 355L567 354L556.1 353.4L544.5 353.2L531.6 353.4L516.7 353.8L499.3 354.7L452.3 357.6L357.1 364.1L356 370.1L453 363.4L500.4 360.5L518 359.7L532.8 359.2L545.8 359.1L557.3 359.3L568.1 359.9L578.6 360.8L589.4 362.2L601.1 364.1L629.4 369.8L684.3 381.8Z"/><path fill="#00dfff" d="M680.5 369.6L627.4 358L611.8 354.8L599.2 352.4L587.8 350.5L577 349.1L566.4 348.2L555.6 347.6L544 347.4L531.5 347.5L516.5 348L499.1 348.8L452 351.7L358.1 358.1L357.1 364.1L452.3 357.6L499.3 354.7L516.7 353.8L531.6 353.4L544.5 353.2L556.1 353.4L567 354L577.6 355L588.4 356.4L599.9 358.2L612.5 360.6L628 363.8L682.4 375.7Z"/><path fill="#00efff" d="M678.6 363.5L625.9 352L610.6 348.8L598 346.5L586.5 344.6L575.8 343.3L565.4 342.3L554.5 341.8L542.8 341.5L530.3 341.7L515.3 342.1L497.9 342.9L451.3 345.8L359.2 352.1L358.1 358.1L452 351.7L499.1 348.8L516.5 348L531.5 347.5L544 347.4L555.6 347.6L566.4 348.2L577 349.1L587.8 350.5L599.2 352.4L611.8 354.8L627.4 358L680.5 369.6Z"/><path fill="#00ffff" d="M676.7 357.4L625 346.1L597.3 340.7L585.8 338.8L575.4 337.5L564.8 336.5L554.1 335.9L542.5 335.7L529.7 335.8L515.2 336.2L497.7 337.1L451.5 339.9L360.3 346.1L359.2 352.1L451.3 345.8L497.9 342.9L515.3 342.1L530.3 341.7L542.8 341.5L554.5 341.8L565.4 342.3L575.8 343.3L586.5 344.6L598 346.5L610.6 348.8L625.9 352L678.6 363.5Z"/><path fill="#10ffef" d="M674.8 351.3L623.8 340.2L608.5 337.1L596.1 334.7L584.5 332.9L573.9 331.6L563.7 330.6L553.1 330.1L541.5 329.8L529 330L514.5 330.4L497 331.2L450.8 334L361.4 340.1L360.3 346.1L451.5 339.9L497.7 337.1L515.2 336.2L529.7 335.8L542.5 335.7L554.1 335.9L564.8 336.5L575.4 337.5L585.8 338.8L597.3 340.7L625 346.1L676.7 357.4Z"/><path fill="#20ffdf" d="M672.9 345.2L622.6 334.3L607.5 331.2L595.2 328.9L583.8 327.1L573.3 325.7L563.2 324.8L552.4 324.2L541 324L528.4 324.1L513.9 324.5L496.3 325.3L450.6 328.1L362.5 334.2L361.4 340.1L450.8 334L497 331.2L514.5 330.4L529 330L541.5 329.8L553.1 330.1L563.7 330.6L573.9 331.6L584.5 332.9L596.1 334.7L608.5 337.1L623.8 340.2L674.8 351.3Z"/><path fill="#30ffcf" d="M670.9 339.1L621.4 328.3L606.4 325.3L594.1 323L582.8 321.2L572.3 319.9L562.1 319L551.3 318.4L539.7 318.2L527.2 318.3L512.7 318.7L495.7 319.5L450.4 322.2L363.6 328.2L362.5 334.2L450.6 328.1L496.3 325.3L513.9 324.5L528.4 324.1L541 324L552.4 324.2L563.2 324.8L573.3 325.7L583.8 327.1L595.2 328.9L607.5 331.2L622.6 334.3L672.9 345.2Z"/><path fill="#40ffbf" d="M669 333.1L620.2 322.4L605.3 319.4L593.1 317.1L581.8 315.3L571.6 314.1L561.5 313.1L550.7 312.6L539.3 312.3L526.6 312.4L512.6 312.8L495.5 313.6L450.6 316.3L364.7 322.2L363.6 328.2L450.4 322.2L495.7 319.5L512.7 318.7L527.2 318.3L539.7 318.2L551.3 318.4L562.1 319L572.3 319.9L582.8 321.2L594.1 323L606.4 325.3L621.4 328.3L670.9 339.1Z"/><path fill="#50ffaf" d="M667 327L619 316.5L604.3 313.5L592.1 311.3L580.8 309.5L570.6 308.2L560.3 307.3L549.5 306.7L537.9 306.5L525.4 306.6L511.4 307L494.3 307.8L449.9 310.5L365.8 316.2L364.7 322.2L450.6 316.3L495.5 313.6L512.6 312.8L526.6 312.4L539.3 312.3L550.7 312.6L561.5 313.1L571.6 314.1L581.8 315.3L593.1 317.1L605.3 319.4L620.2 322.4L669 333.1Z"/><path fill="#60ff9f" d="M665 320.9L618 310.6L603.3 307.7L591.1 305.4L579.7 303.6L569.4 302.3L559.2 301.4L549 300.9L538 300.7L525.4 300.7L511.3 301.1L494.2 301.9L449.7 304.6L366.9 310.2L365.8 316.2L449.9 310.5L494.3 307.8L511.4 307L525.4 306.6L537.9 306.5L549.5 306.7L560.3 307.3L570.6 308.2L580.8 309.5L592.1 311.3L604.3 313.5L619 316.5L667 327Z"/><path fill="#70ff8f" d="M663 314.8L616.4 304.7L601.7 301.7L589.7 299.5L578.6 297.8L568.3 296.5L558 295.6L547.7 295L536.2 294.8L524.1 294.9L509.7 295.3L493.1 296.1L449.1 298.7L368 304.2L366.9 310.2L449.7 304.6L494.2 301.9L511.3 301.1L525.4 300.7L538 300.7L549 300.9L559.2 301.4L569.4 302.3L579.7 303.6L591.1 305.4L603.3 307.7L618 310.6L665 320.9Z"/><path fill="#80ff80" d="M660.9 308.7L615.1 298.7L600.7 295.8L588.7 293.6L577.5 291.9L567.2 290.6L557.3 289.8L546.7 289.2L535.5 289L523.2 289.1L509.1 289.5L492.5 290.2L448.9 292.8L369.2 298.3L368 304.2L449.1 298.7L493.1 296.1L509.7 295.3L524.1 294.9L536.2 294.8L547.7 295L558 295.6L568.3 296.5L578.6 297.8L589.7 299.5L601.7 301.7L616.4 304.7L663 314.8Z"/><path fill="#8fff70" d="M658.9 302.6L613.8 292.8L599.6 290L587.6 287.8L576.8 286.1L566.4 284.8L556.2 283.9L545.6 283.4L534.6 283.2L522.1 283.3L491.9 284.4L448.7 287L370.3 292.3L369.2 298.3L448.9 292.8L492.5 290.2L509.1 289.5L523.2 289.1L535.5 289L546.7 289.2L557.3 289.8L567.2 290.6L577.5 291.9L588.7 293.6L600.7 295.8L615.1 298.7L660.9 308.7Z"/><path fill="#9fff60" d="M656.8 296.5L612.5 286.9L598.2 284.1L586.5 281.9L575.6 280.2L565.2 279L555.2 278.1L544.9 277.6L534.1 277.4L521.5 277.4L491.3 278.6L448.6 281.1L371.5 286.3L370.3 292.3L448.7 287L491.9 284.4L522.1 283.3L534.6 283.2L545.6 283.4L556.2 283.9L566.4 284.8L576.8 286.1L587.6 287.8L599.6 290L613.8 292.8L658.9 302.6Z"/><path fill="#afff50" d="M654.7 290.4L611.3 281.1L597.4 278.3L585.6 276.1L574.7 274.4L564.5 273.2L554.4 272.3L544 271.8L533 271.6L520.8 271.6L490.7 272.7L448.4 275.2L372.7 280.4L371.5 286.3L448.6 281.1L491.3 278.6L521.5 277.4L534.1 277.4L544.9 277.6L555.2 278.1L565.2 279L575.6 280.2L586.5 281.9L598.2 284.1L612.5 286.9L656.8 296.5Z"/><path fill="#bfff40" d="M652.6 284.4L609.9 275.1L584.4 270.3L573.5 268.6L563.5 267.4L553.6 266.5L543.3 266L532 265.7L520.1 265.8L490.2 266.9L448.3 269.4L373.9 274.4L372.7 280.4L448.4 275.2L490.7 272.7L520.8 271.6L533 271.6L544 271.8L554.4 272.3L564.5 273.2L574.7 274.4L585.6 276.1L597.4 278.3L611.3 281.1L654.7 290.4Z"/><path fill="#cfff30" d="M650.4 278.3L608.5 269.2L583.2 264.4L572.6 262.8L562.6 261.6L552.7 260.7L542.4 260.2L531.6 259.9L519.2 260L489.6 261.1L448.2 263.5L375.2 268.4L373.9 274.4L448.3 269.4L490.2 266.9L520.1 265.8L532 265.7L543.3 266L553.6 266.5L563.5 267.4L573.5 268.6L584.4 270.3L609.9 275.1L652.6 284.4Z"/><path fill="#dfff20" d="M648.2 272.2L607 263.3L581.9 258.6L571.3 257L561.2 255.7L551.2 254.9L541 254.4L530 254.1L518 254.2L488.7 255.3L447.7 257.7L376.4 262.5L375.2 268.4L448.2 263.5L489.6 261.1L519.2 260L531.6 259.9L542.4 260.2L552.7 260.7L562.6 261.6L572.6 262.8L583.2 264.4L608.5 269.2L650.4 278.3Z"/><path fill="#efff10" d="M645.9 266.1L605.8 257.5L580.9 252.8L570.3 251.2L560.4 250L550.7 249.1L540.4 248.6L529.6 248.4L517.6 248.4L488.7 249.4L448.1 251.8L377.7 256.5L376.4 262.5L447.7 257.7L488.7 255.3L518 254.2L530 254.1L541 254.4L551.2 254.9L561.2 255.7L571.3 257L581.9 258.6L607 263.3L648.2 272.2Z"/><path fill="#ffff00" d="M643.6 260.1L604.2 251.6L579.6 246.9L568.9 245.3L559.1 244.2L549.1 243.3L539.3 242.8L528.7 242.6L516.7 242.6L488.1 243.6L448 246L379 250.6L377.7 256.5L448.1 251.8L488.7 249.4L517.6 248.4L529.6 248.4L540.4 248.6L550.7 249.1L560.4 250L570.3 251.2L580.9 252.8L605.8 257.5L645.9 266.1Z"/><path fill="#ffef00" d="M641.3 254L602.6 245.7L578.2 241.1L567.8 239.5L558 238.4L548.2 237.6L538.3 237L527.5 236.8L515.8 236.9L487.3 237.9L447.6 240.1L380.3 244.7L379 250.6L448 246L488.1 243.6L516.7 242.6L528.7 242.6L539.3 242.8L549.1 243.3L559.1 244.2L568.9 245.3L579.6 246.9L604.2 251.6L643.6 260.1Z"/><path fill="#ffdf00" d="M638.9 247.9L600.9 239.8L576.7 235.3L566.3 233.7L556.4 232.6L546.7 231.8L536.8 231.3L526.1 231L514.6 231.1L486.4 232.1L447.1 234.3L381.6 238.7L380.3 244.7L447.6 240.1L487.3 237.9L515.8 236.9L527.5 236.8L538.3 237L548.2 237.6L558 238.4L567.8 239.5L578.2 241.1L602.6 245.7L641.3 254Z"/><path fill="#ffcf00" d="M636.5 241.9L599.2 233.9L575.5 229.5L565.3 228L555.6 226.8L545.9 226L536.2 225.5L525.6 225.3L514.1 225.3L486 226.3L447.6 228.5L383 232.8L381.6 238.7L447.1 234.3L486.4 232.1L514.6 231.1L526.1 231L536.8 231.3L546.7 231.8L556.4 232.6L566.3 233.7L576.7 235.3L600.9 239.8L638.9 247.9Z"/><path fill="#ffbf00" d="M634 235.8L597.8 228.1L574.3 223.7L564.1 222.2L554.7 221.1L545.1 220.3L535.3 219.8L524.9 219.6L513.3 219.6L485.7 220.5L447.7 222.7L384.4 226.9L383 232.8L447.6 228.5L486 226.3L514.1 225.3L525.6 225.3L536.2 225.5L545.9 226L555.6 226.8L565.3 228L575.5 229.5L599.2 233.9L636.5 241.9Z"/><path fill="#ffaf00" d="M631.5 229.8L595.9 222.2L572.7 217.9L562.8 216.4L553.3 215.3L543.6 214.5L534 214L523.6 213.8L512 213.9L484.9 214.8L447.4 216.9L385.8 221L384.4 226.9L447.7 222.7L485.7 220.5L513.3 219.6L524.9 219.6L535.3 219.8L545.1 220.3L554.7 221.1L564.1 222.2L574.3 223.7L597.8 228.1L634 235.8Z"/><path fill="#ff9f00" d="M628.9 223.7L594.1 216.3L571.3 212.1L561.4 210.7L551.8 209.6L542.6 208.8L532.7 208.3L522.3 208.1L511.3 208.1L484.2 209L447.5 211.1L387.3 215.1L385.8 221L447.4 216.9L484.9 214.8L512 213.9L523.6 213.8L534 214L543.6 214.5L553.3 215.3L562.8 216.4L572.7 217.9L595.9 222.2L631.5 229.8Z"/><path fill="#ff8f00" d="M626.2 217.7L592.4 210.5L569.8 206.4L559.9 204.9L550.7 203.9L541.4 203.1L531.5 202.6L521.2 202.4L510.1 202.4L483.5 203.3L447.2 205.3L388.8 209.2L387.3 215.1L447.5 211.1L484.2 209L511.3 208.1L522.3 208.1L532.7 208.3L542.6 208.8L551.8 209.6L561.4 210.7L571.3 212.1L594.1 216.3L628.9 223.7Z"/><path fill="#ff8000" d="M623.5 211.6L590.6 204.7L568.2 200.6L558.3 199.2L549 198.1L539.7 197.4L530.4 196.9L520 196.7L509 196.7L482.8 197.6L447 199.5L390.3 203.3L388.8 209.2L447.2 205.3L483.5 203.3L510.1 202.4L521.2 202.4L531.5 202.6L541.4 203.1L550.7 203.9L559.9 204.9L569.8 206.4L592.4 210.5L626.2 217.7Z"/><path fill="#ff7000" d="M620.7 205.6L588.6 198.8L566.7 194.9L557 193.5L547.7 192.4L538.5 191.7L529.3 191.2L519.4 191L508.4 191L482.2 191.9L447.3 193.8L391.9 197.4L390.3 203.3L447 199.5L482.8 197.6L509 196.7L520 196.7L530.4 196.9L539.7 197.4L549 198.1L558.3 199.2L568.2 200.6L590.6 204.7L623.5 211.6Z"/><path fill="#ff6000" d="M617.8 199.6L586.7 193L565 189.1L555.6 187.8L546.7 186.8L537.6 186L528.2 185.6L518.5 185.3L507.4 185.4L481.6 186.2L447.1 188L393.5 191.5L391.9 197.4L447.3 193.8L482.2 191.9L508.4 191L519.4 191L529.3 191.2L538.5 191.7L547.7 192.4L557 193.5L566.7 194.9L588.6 198.8L620.7 205.6Z"/><path fill="#ff5000" d="M614.9 193.5L584.4 187.2L563.2 183.4L553.7 182.1L544.7 181.1L535.8 180.4L526.5 179.9L516.9 179.7L505.9 179.7L481.1 180.5L447.5 182.3L395.2 185.7L393.5 191.5L447.1 188L481.6 186.2L507.4 185.4L518.5 185.3L528.2 185.6L537.6 186L546.7 186.8L555.6 187.8L565 189.1L586.7 193L617.8 199.6Z"/><path fill="#ff4000" d="M611.8 187.5L582.3 181.4L561.6 177.7L552.5 176.4L543.5 175.4L534.6 174.7L525.4 174.3L515.6 174L505.1 174.1L480.2 174.8L447.5 176.6L396.9 179.8L395.2 185.7L447.5 182.3L481.1 180.5L505.9 179.7L516.9 179.7L526.5 179.9L535.8 180.4L544.7 181.1L553.7 182.1L563.2 183.4L584.4 187.2L614.9 193.5Z"/><path fill="#ff3000" d="M608.7 181.5L580.1 175.6L559.6 172L550.4 170.7L541.7 169.8L533.1 169.1L524 168.6L504.3 168.4L479.8 169.1L447.5 170.9L398.7 174L396.9 179.8L447.5 176.6L480.2 174.8L505.1 174.1L515.6 174L525.4 174.3L534.6 174.7L543.5 175.4L552.5 176.4L561.6 177.7L582.3 181.4L611.8 187.5Z"/><path fill="#ff2000" d="M605.4 175.5L577.8 169.8L557.8 166.3L548.9 165.1L540.2 164.2L531.7 163.5L522.8 163.1L503 162.8L479 163.5L447.6 165.2L400.6 168.2L398.7 174L447.5 170.9L479.8 169.1L504.3 168.4L524 168.6L533.1 169.1L541.7 169.8L550.4 170.7L559.6 172L580.1 175.6L608.7 181.5Z"/><path fill="#ff1000" d="M602 169.5L575.4 164.1L555.8 160.7L547.2 159.5L538.5 158.6L530 157.9L521.3 157.5L501.8 157.3L478.3 157.9L447.7 159.5L402.5 162.4L400.6 168.2L447.6 165.2L479 163.5L503 162.8L522.8 163.1L531.7 163.5L540.2 164.2L548.9 165.1L557.8 166.3L577.8 169.8L605.4 175.5Z"/><path fill="#ff0000" d="M598.5 163.5L572.5 158.2L553.4 155L536.4 153L528 152.3L519.3 151.9L500.7 151.7L477.6 152.3L447.9 153.8L404.5 156.6L402.5 162.4L447.7 159.5L478.3 157.9L501.8 157.3L521.3 157.5L530 157.9L538.5 158.6L547.2 159.5L555.8 160.7L575.4 164.1L602 169.5Z"/><path fill="#ef0000" d="M594.8 157.6L570.1 152.6L551.4 149.4L534.9 147.5L518.3 146.4L499.7 146.2L477.4 146.8L448.3 148.2L406.5 150.8L404.5 156.6L447.9 153.8L477.6 152.3L500.7 151.7L519.3 151.9L528 152.3L536.4 153L553.4 155L572.5 158.2L598.5 163.5Z"/><path fill="#df0000" d="M591 151.6L567.5 146.9L549.3 143.9L532.7 141.9L516.4 140.9L498.3 140.7L476.6 141.2L448.7 142.6L408.7 145.1L406.5 150.8L448.3 148.2L477.4 146.8L499.7 146.2L518.3 146.4L534.9 147.5L551.4 149.4L570.1 152.6L594.8 157.6Z"/><path fill="#cf0000" d="M587 145.6L564.4 141.2L546.7 138.3L530.7 136.4L514.5 135.4L497 135.2L475.8 135.7L448.7 137L411 139.3L408.7 145.1L448.7 142.6L476.6 141.2L498.3 140.7L516.4 140.9L532.7 141.9L549.3 143.9L567.5 146.9L591 151.6Z"/><path fill="#bf0000" d="M582.8 139.7L561.1 135.4L544.1 132.7L528.8 131L513 130L495.9 129.8L475.1 130.3L449.4 131.5L413.3 133.6L411 139.3L448.7 137L475.8 135.7L497 135.2L514.5 135.4L530.7 136.4L546.7 138.3L564.4 141.2L587 145.6Z"/><path fill="#af0000" d="M578.3 133.8L557.9 129.8L541.3 127.2L526.2 125.5L510.7 124.6L493.8 124.4L474 124.8L449.2 126L415.8 128L413.3 133.6L449.4 131.5L475.1 130.3L495.9 129.8L513 130L528.8 131L544.1 132.7L561.1 135.4L582.8 139.7Z"/><path fill="#9f0000" d="M573.7 127.9L554.4 124.2L538.6 121.7L523.7 120.1L508.8 119.3L492.5 119L473.1 119.4L449.6 120.5L418.5 122.3L415.8 128L449.2 126L474 124.8L493.8 124.4L510.7 124.6L526.2 125.5L541.3 127.2L557.9 129.8L578.3 133.8Z"/><path fill="#8f0000" d="M568.7 122L550.6 118.6L535.6 116.3L521.5 114.8L507.1 114L491.4 113.7L472.9 114.1L450.7 115L421.3 116.7L418.5 122.3L449.6 120.5L473.1 119.4L492.5 119L508.8 119.3L523.7 120.1L538.6 121.7L554.4 124.2L573.7 127.9Z"/><path fill="#800000" d="M421.3 116.7L450.7 115L472.9 114.1L491.4 113.7L507.1 114L521.5 114.8L535.6 116.3L550.6 118.6L568.7 122L563.6 116.3L560.9 115.6L558.9 115.4L556.9 114.9L555.1 114.7L553.4 114.2L552.1 114.2L550.4 113.7L549.2 113.7L547.7 113.2L546.7 113.3L545.5 112.9L544.5 112.9L543.3 112.5L542.5 112.6L541.3 112.2L540.6 112.3L539.6 112L538.8 112L537.9 111.7L537.1 111.8L536.2 111.5L535.7 111.5L533.3 111.1L532.7 111.1L531.8 110.9L531.3 111L530.6 110.7L530.1 110.8L527 110.3L526.5 110.4L525.8 110.2L524.3 110.2L523.6 110L516.9 109.4L505.9 108.8L491.7 108.5L472.9 108.8L453 109.6L424.4 111.2L424.2 111.4Z"/></g>
<g id="sp" opacity=".7"><path fill="#800000" d="M562.2 116.1L563.2 116.1L474.5 122.3L424.7 111.2L450.8 109.7L473.6 108.8L491.3 108.5L501.9 108.7L516.2 109.4L530.8 110.8L546.3 113L558.4 115.2Z"/></g>
<path fill="#000078" opacity=".9" d="M395 479.2L401 478.6L407 478.1L413 477.5L419 476.9L425 476.2L431 475.6L437 474.9L443 474.2L449 473.4L455 472.6L461 471.8L467 470.9L473 469.9L479 469L485 467.9L491 466.8L497 465.5L503 464.3L509 462.9L515 461.6L521 460.1L527 458.5L533 457L539 455.5L545 454L551 452.6L557 451.4L563 450.5L569 449.8L575 449.6L575 449.2L575 453.3L569 453.5L563 454.2L557 455.1L551 456.3L545 457.7L539 459.2L533 460.7L527 462.2L521 463.8L515 465.3L509 466.6L503 468L497 469.2L491 470.5L485 471.6L479 472.7L473 473.6L467 474.6L461 475.5L455 476.3L449 477.1L443 477.9L437 478.6L431 479.3L425 479.9L419 480.6L413 481.2L407 481.8L401 482.3L395 482.9L395 482.9Z"/></g>
<path d="M772.6 529.2L595.8 489.9L595.8 62.3M306.1 512.6L619.1 490.8L619.1 63.1M698.1 534.4L521.3 495.1L521.3 67.4M348.2 521.9L661.2 500.1L661.2 72.4M623.5 539.6L446.7 500.3L446.7 72.6M390.3 531.3L703.3 509.5L703.3 81.8M549 544.8L372.2 505.5L372.2 77.8M432.4 540.6L745.4 518.8L745.4 91.2M474.5 550L297.7 510.7L297.7 83M474.5 550L787.5 528.2L787.5 100.5M297.7 510.7L610.7 488.9L787.5 528.2M297.7 463.2L610.7 441.4L787.5 480.7M297.7 415.7L610.7 393.9L787.5 433.2M297.7 368.1L610.7 346.3L787.5 385.6M297.7 320.6L610.7 298.8L787.5 338.1M297.7 273.1L610.7 251.3L787.5 290.6M297.7 225.6L610.7 203.8L787.5 243.1M297.7 178.1L610.7 156.3L787.5 195.6M297.7 130.5L610.7 108.7L787.5 148M297.7 83L610.7 61.2L787.5 100.5" fill="none" stroke="#000" stroke-opacity=".02" stroke-width="1"/>
<path d="M297.7 83L297.7 510.7L474.5 550L787.5 528.2M297.7 510.7L286.7 507.9M297.7 463.2L286.7 460.4M297.7 415.7L286.7 412.9M297.7 368.1L286.7 365.3M297.7 320.6L286.7 317.8M297.7 273.1L286.7 270.3M297.7 225.6L286.7 222.8M297.7 178.1L286.7 175.3M297.7 130.5L286.7 127.7M297.7 83L286.7 80.2M306.1 512.6L306.1 523.1M772.6 529.2L772.6 539.7M348.2 521.9L348.2 532.4M698.1 534.4L698.1 544.9M390.3 531.3L390.3 541.8M623.5 539.6L623.5 550.1M432.4 540.6L432.4 551.1M549 544.8L549 555.3M474.5 550L474.5 560.5" fill="none" stroke="#333" stroke-width="1"/>
<g font-family="'Liberation Sans',sans-serif" font-size="12" fill="#333"><text x="281.6" y="513.7" text-anchor="end" font-size="12.3">-110</text><text x="281.6" y="466.2" text-anchor="end" font-size="12.3">-100</text><text x="281.6" y="418.7" text-anchor="end" font-size="12.3">-90</text><text x="281.6" y="371.1" text-anchor="end" font-size="12.3">-80</text><text x="281.6" y="323.6" text-anchor="end" font-size="12.3">-70</text><text x="281.6" y="276.1" text-anchor="end" font-size="12.3">-60</text><text x="281.6" y="228.6" text-anchor="end" font-size="12.3">-50</text><text x="281.6" y="181.1" text-anchor="end" font-size="12.3">-40</text><text x="281.6" y="133.5" text-anchor="end" font-size="12.3">-30</text><text x="281.6" y="86" text-anchor="end" font-size="12.3">-20</text><text x="305.3" y="541.7" text-anchor="end">0.5</text><text x="772.9" y="558.3">0.5</text><text x="347.4" y="551" text-anchor="end">1</text><text x="698.4" y="563.5">1</text><text x="389.5" y="560.4" text-anchor="end">1.5</text><text x="623.8" y="568.7">1.5</text><text x="431.6" y="569.7" text-anchor="end">2</text><text x="549.3" y="573.9">2</text><text x="473.7" y="579.1" text-anchor="end">2.5</text><text x="474.8" y="579.1">2.5</text></g>
<g font-family="'Liberation Serif',serif" font-size="13" fill="#444"><text x="630.8" y="586.3" text-anchor="middle" letter-spacing=".7" font-size="13.2">A-B bond distance (Å)</text><text transform="translate(248,297.6) rotate(-90)" text-anchor="middle" letter-spacing=".72" font-size="13.35">Potential Energy (Kcal/mol)</text></g>
</svg>

<div id="gui" class="abs" style="left:0;top:0">
<!-- Atom Types -->
<div class="pn" style="left:19px;top:63px;width:111px;height:152px"></div>
<div class="pt" style="left:46px;top:57px">Atom Types</div>
<div class="lb" style="left:45px;top:79.8px;width:60px">Atom A</div>
<div class="dd" style="left:32px;top:95px;width:89.5px;height:20px"><span style="left:2px;top:4px;line-height:12px">hydrogen</span><div class="a"></div></div>
<div class="lb" style="left:45px;top:125px;width:60px">Atom B</div>
<div class="dd" style="left:31px;top:140px;width:89px;height:20px"><span style="left:2px;top:4px;line-height:12px">hydrogen</span><div class="a"></div></div>
<div class="lb" style="left:45px;top:171.6px;width:60px">Atom C</div>
<div class="dd" style="left:31.5px;top:184px;width:89px;height:20px"><span style="left:2px;top:4px;line-height:12px">hydrogen</span><div class="a"></div></div>
<!-- Update -->
<div style="left:142px;top:63px;width:94px;height:46px;box-sizing:border-box;border:1px solid #7c7c7c;border-radius:3px;background:linear-gradient(#f2f2f2,#ebebeb 48%,#dddddd 52%,#cfcfcf);box-shadow:inset 0 0 0 1px rgba(255,255,255,.7);text-align:center;line-height:46px">Update</div>
<!-- Delta -->
<div class="pn" style="left:142px;top:121.5px;width:95px;height:36.5px"></div>
<div class="pt" style="left:146.5px;top:115.3px">Delta Value</div>
<div class="ed" style="left:151px;top:129px;width:81px;height:22px;line-height:20px">0.424</div>
<!-- Calc type -->
<div style="left:143px;top:164px;width:95px;height:52px;background:#fff"></div>
<div class="pn" style="left:143px;top:171.5px;width:94px;height:44px;box-shadow:none;background:none"></div>
<div class="pt" style="left:147px;top:163.5px;background:#fff;letter-spacing:-.25px">Calculation Type</div>
<div class="rd" style="left:152.6px;top:180.8px"></div><div class="lb" style="left:168px;top:181px;text-align:left">Dynamics</div>
<div style="left:152px;top:196px;width:60px;height:12px;background:#f0f0f0"></div>
<div class="rd on" style="left:152.6px;top:197px"></div><div class="lb" style="left:168px;top:196px;text-align:left">MEP</div>
<!-- Steps -->
<div class="pn" style="left:20px;top:229px;width:110px;height:34px"></div>
<div class="pt" style="left:24.5px;top:222.6px">Steps</div>
<div class="ed" style="left:33px;top:237px;width:82px;height:17.5px;line-height:16px">5000</div>
<!-- Cutoff -->
<div class="pn" style="left:142px;top:229px;width:96px;height:34px"></div>
<div class="pt" style="left:146px;top:222px;letter-spacing:-.05px">Cutoff (Kcal/ mol)</div>
<div class="ed" style="left:155.5px;top:237px;width:76px;height:19.5px;line-height:17.5px">-20</div>
<!-- Collision angle -->
<div class="pn" style="left:19px;top:274.5px;width:219px;height:37.5px"></div>
<div class="pt" style="left:22.5px;top:267.5px;letter-spacing:-.2px">Collision Angle</div>
<div id="sl" style="left:29px;top:281.5px;width:208px;height:18.5px;background:#e5e5e5;border-bottom:1px solid #6e6e6e;box-sizing:border-box">
 <div style="left:0;top:0;width:13.5px;height:17.5px;background:#f0f0f0;border-right:1px solid #6e6e6e"></div>
 <div style="left:5px;top:5.5px;border:3px solid transparent;border-right:3.5px solid #444;border-left:0"></div>
 <div style="left:178.5px;top:0;width:14.5px;height:17.5px;background:#f0f0f0;border-right:1px solid #6e6e6e"></div>
 <div style="left:194px;top:0;width:13px;height:17.5px;background:#f0f0f0;border-right:1px solid #6e6e6e"></div>
 <div style="left:199.5px;top:5.5px;border:3px solid transparent;border-left:3.5px solid #444;border-right:0"></div>
</div>
<!-- Initial conditions -->
<div class="pn" style="left:17px;top:330px;width:225px;height:98px"></div>
<div class="pt" style="left:93.5px;top:322.8px;letter-spacing:-.22px">Initial Conditions</div>
<div class="lb" style="left:29px;top:337px;width:90px">AB Distance (A)</div>
<div class="lb" style="left:142px;top:337px;width:90px;letter-spacing:-.3px">AB Momentum</div>
<div class="ed" style="left:28px;top:355px;width:91px;height:17px;line-height:16px">0.918</div>
<div class="ed" style="left:139.5px;top:355px;width:92px;height:17px;line-height:16px">0</div>
<div class="lb" style="left:28px;top:382.4px;width:90px">BC Distance (A)</div>
<div class="lb" style="left:140.5px;top:382.4px;width:90px;letter-spacing:-.3px">BC Momentum</div>
<div class="ed" style="left:27px;top:400px;width:92px;height:17.5px;line-height:16px">0.908</div>
<div class="ed" style="left:139px;top:400px;width:92.5px;height:17.5px;line-height:16px">0</div>
<!-- Listbox -->
<div id="list" style="left:17px;top:441px;width:223px;height:118px;box-sizing:border-box;border:1px solid #828790;background:#fff;overflow:hidden">
 <div class="it" style="top:1.5px">Contour Plot</div>
 <div class="it sel" style="top:14.3px">Surface Plot</div>
 <div class="it" style="top:27.1px">Internuclear Distances vs Time</div>
 <div class="it" style="top:39.9px">Potential Energy vs Time</div>
 <div class="it" style="top:52.7px">Kinetic Energy vs Time</div>
 <div class="it" style="top:65.5px">Internuclear Velocities vs Internuclear Distance</div>
 <div class="it" style="top:78.3px">Internuclear Accelerations vs Internuclear Distance</div>
 <div class="it" style="top:91.1px">Internuclear Momenta vs Internuclear Distance</div>
 <div id="vs" style="left:206px;top:0;width:15px;height:102px;background:#f0f0f0">
  <div style="left:4.5px;top:6.5px;border:3px solid transparent;border-bottom:3.5px solid #444;border-top:0"></div>
  <div style="left:0;top:15px;width:13px;height:44px;border:1px solid #979797;border-radius:2px;background:linear-gradient(90deg,#f4f4f4,#e6e6e6 50%,#d4d4d4)"></div>
  <div style="left:4px;top:33px;width:7px;height:1px;background:#777;box-shadow:0 2px 0 #777,0 4px 0 #777"></div>
  <div style="left:4.5px;top:91.5px;border:3px solid transparent;border-top:3.5px solid #444;border-bottom:0"></div>
 </div>
 <div id="hs" style="left:0;top:101px;width:221px;height:14px;background:#f0f0f0">
  <div style="left:5.5px;top:4px;border:3px solid transparent;border-right:3.5px solid #444;border-left:0"></div>
  <div style="left:16px;top:0;width:155px;height:12px;border:1px solid #979797;border-radius:2px;background:linear-gradient(#f4f4f4,#e6e6e6 50%,#d4d4d4)"></div>
  <div style="left:91px;top:4px;width:1px;height:6px;background:#777;box-shadow:2px 0 0 #777,4px 0 0 #777"></div>
  <div style="left:196.5px;top:4px;border:3px solid transparent;border-left:3.5px solid #444;border-right:0"></div>
 </div>
</div>
</div>

<div id="bot"></div>
</div>
</body></html>
